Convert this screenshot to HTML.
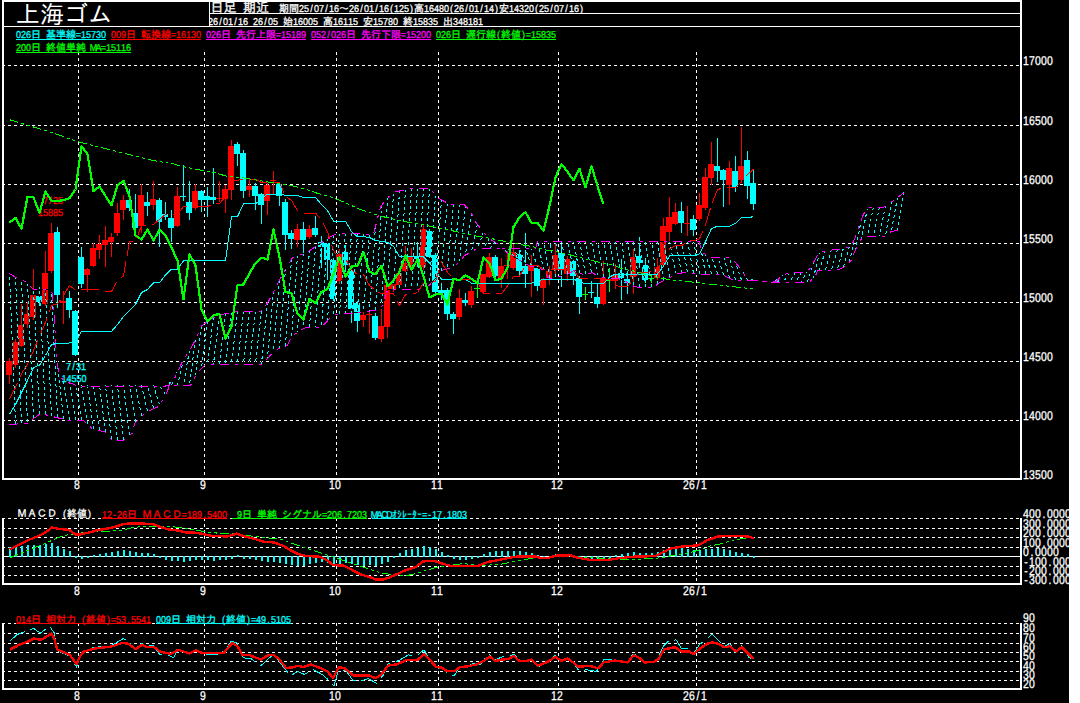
<!DOCTYPE html>
<html lang="ja"><head><meta charset="utf-8"><title>上海ゴム 日足 期近</title>
<style>html,body{margin:0;padding:0;background:#fff;overflow:hidden}svg{display:block;font-family:'Liberation Sans','IPAGothic',sans-serif}</style>
</head><body>
<svg width="1080" height="703" viewBox="0 0 1080 703" shape-rendering="crispEdges" text-rendering="geometricPrecision">
<rect x="0" y="0" width="1069" height="703" fill="#000"/>
<line x1="2" y1="65.5" x2="1020" y2="65.5" stroke="#fff" stroke-dasharray="3,3"/>
<line x1="2" y1="125.5" x2="1020" y2="125.5" stroke="#fff" stroke-dasharray="3,3"/>
<line x1="2" y1="184.5" x2="1020" y2="184.5" stroke="#fff" stroke-dasharray="3,3"/>
<line x1="2" y1="243.5" x2="1020" y2="243.5" stroke="#fff" stroke-dasharray="3,3"/>
<line x1="2" y1="302.5" x2="1020" y2="302.5" stroke="#fff" stroke-dasharray="3,3"/>
<line x1="2" y1="361.5" x2="1020" y2="361.5" stroke="#fff" stroke-dasharray="3,3"/>
<line x1="2" y1="420.5" x2="1020" y2="420.5" stroke="#fff" stroke-dasharray="3,3"/>
<line x1="78.5" y1="52" x2="78.5" y2="478" stroke="#fff" stroke-dasharray="3,3"/>
<line x1="204.5" y1="52" x2="204.5" y2="478" stroke="#fff" stroke-dasharray="3,3"/>
<line x1="336.5" y1="52" x2="336.5" y2="478" stroke="#fff" stroke-dasharray="3,3"/>
<line x1="438.5" y1="52" x2="438.5" y2="478" stroke="#fff" stroke-dasharray="3,3"/>
<line x1="558.5" y1="52" x2="558.5" y2="478" stroke="#fff" stroke-dasharray="3,3"/>
<line x1="696.5" y1="52" x2="696.5" y2="478" stroke="#fff" stroke-dasharray="3,3"/>
<line x1="2" y1="518.5" x2="1020" y2="518.5" stroke="#fff" stroke-dasharray="3,3"/>
<line x1="2" y1="528.5" x2="1020" y2="528.5" stroke="#fff" stroke-dasharray="3,3"/>
<line x1="2" y1="537.5" x2="1020" y2="537.5" stroke="#fff" stroke-dasharray="3,3"/>
<line x1="2" y1="547.5" x2="1020" y2="547.5" stroke="#fff" stroke-dasharray="3,3"/>
<line x1="2" y1="566.5" x2="1020" y2="566.5" stroke="#fff" stroke-dasharray="3,3"/>
<line x1="2" y1="575.5" x2="1020" y2="575.5" stroke="#fff" stroke-dasharray="3,3"/>
<line x1="78.5" y1="518" x2="78.5" y2="583" stroke="#fff" stroke-dasharray="3,3"/>
<line x1="204.5" y1="518" x2="204.5" y2="583" stroke="#fff" stroke-dasharray="3,3"/>
<line x1="336.5" y1="518" x2="336.5" y2="583" stroke="#fff" stroke-dasharray="3,3"/>
<line x1="438.5" y1="518" x2="438.5" y2="583" stroke="#fff" stroke-dasharray="3,3"/>
<line x1="558.5" y1="518" x2="558.5" y2="583" stroke="#fff" stroke-dasharray="3,3"/>
<line x1="696.5" y1="518" x2="696.5" y2="583" stroke="#fff" stroke-dasharray="3,3"/>
<line x1="2" y1="623.5" x2="1020" y2="623.5" stroke="#fff" stroke-dasharray="3,3"/>
<line x1="2" y1="633.5" x2="1020" y2="633.5" stroke="#fff" stroke-dasharray="3,3"/>
<line x1="2" y1="643.5" x2="1020" y2="643.5" stroke="#fff" stroke-dasharray="3,3"/>
<line x1="2" y1="652.5" x2="1020" y2="652.5" stroke="#fff" stroke-dasharray="3,3"/>
<line x1="2" y1="661.5" x2="1020" y2="661.5" stroke="#fff" stroke-dasharray="3,3"/>
<line x1="2" y1="671.5" x2="1020" y2="671.5" stroke="#fff" stroke-dasharray="3,3"/>
<line x1="2" y1="680.5" x2="1020" y2="680.5" stroke="#fff" stroke-dasharray="3,3"/>
<line x1="78.5" y1="623" x2="78.5" y2="688" stroke="#fff" stroke-dasharray="3,3"/>
<line x1="204.5" y1="623" x2="204.5" y2="688" stroke="#fff" stroke-dasharray="3,3"/>
<line x1="336.5" y1="623" x2="336.5" y2="688" stroke="#fff" stroke-dasharray="3,3"/>
<line x1="438.5" y1="623" x2="438.5" y2="688" stroke="#fff" stroke-dasharray="3,3"/>
<line x1="558.5" y1="623" x2="558.5" y2="688" stroke="#fff" stroke-dasharray="3,3"/>
<line x1="696.5" y1="623" x2="696.5" y2="688" stroke="#fff" stroke-dasharray="3,3"/>
<rect x="2" y="0" width="1020" height="2" fill="#fff"/>
<rect x="2" y="0" width="2" height="480" fill="#fff"/>
<rect x="1020" y="0" width="2" height="480" fill="#fff"/>
<rect x="2" y="478" width="1020" height="2" fill="#fff"/>
<rect x="209" y="13" width="811" height="1" fill="#fff"/>
<rect x="2" y="26" width="1018" height="1" fill="#fff"/>
<rect x="209" y="0" width="1" height="27" fill="#fff"/>
<rect x="2" y="518" width="2" height="67" fill="#fff"/>
<rect x="1020" y="518" width="2" height="67" fill="#fff"/>
<rect x="2" y="583" width="1020" height="2" fill="#fff"/>
<rect x="4" y="556" width="1016" height="1" fill="#fff"/>
<rect x="2" y="623" width="2" height="67" fill="#fff"/>
<rect x="1020" y="623" width="2" height="67" fill="#fff"/>
<rect x="2" y="688" width="1020" height="2" fill="#fff"/>
<g id="candles">
<rect x="9" y="358.3" width="1" height="25.6" fill="#f00"/>
<rect x="6" y="360.7" width="6" height="14.3" fill="#f00"/>
<rect x="15" y="339" width="1" height="28.5" fill="#f00"/>
<rect x="12" y="341.9" width="6" height="23.1" fill="#f00"/>
<rect x="21" y="303.5" width="1" height="43.5" fill="#f00"/>
<rect x="18" y="324.9" width="6" height="20.6" fill="#f00"/>
<rect x="27" y="302" width="1" height="26.4" fill="#f00"/>
<rect x="24" y="314.2" width="6" height="9.5" fill="#f00"/>
<rect x="33" y="269" width="1" height="51" fill="#f00"/>
<rect x="30" y="295" width="6" height="22" fill="#f00"/>
<rect x="39" y="286.8" width="1" height="19.2" fill="#0ff"/>
<rect x="36" y="295.7" width="6" height="6.3" fill="#0ff"/>
<rect x="45" y="251.2" width="1" height="54.8" fill="#f00"/>
<rect x="42" y="273.3" width="6" height="30.7" fill="#f00"/>
<rect x="51" y="222.8" width="1" height="49.7" fill="#f00"/>
<rect x="48" y="233" width="6" height="37.7" fill="#f00"/>
<rect x="57" y="227" width="1" height="80.8" fill="#0ff"/>
<rect x="54" y="232" width="6" height="62.5" fill="#0ff"/>
<rect x="63" y="291" width="1" height="33" fill="#f00"/>
<rect x="60" y="301" width="6" height="2" fill="#f00"/>
<rect x="69" y="291" width="1" height="27.4" fill="#0ff"/>
<rect x="66" y="297.8" width="6" height="12.1" fill="#0ff"/>
<rect x="75" y="310" width="1" height="46" fill="#0ff"/>
<rect x="72" y="311.3" width="6" height="43.8" fill="#0ff"/>
<rect x="81" y="247" width="1" height="40.5" fill="#0ff"/>
<rect x="78" y="256.9" width="6" height="26.7" fill="#0ff"/>
<rect x="87" y="268" width="1" height="24" fill="#f00"/>
<rect x="84" y="269" width="6" height="6" fill="#f00"/>
<rect x="93" y="243.3" width="1" height="23.4" fill="#f00"/>
<rect x="90" y="248" width="6" height="17.6" fill="#f00"/>
<rect x="99" y="235.4" width="1" height="23.6" fill="#f00"/>
<rect x="96" y="244" width="6" height="5.7" fill="#f00"/>
<rect x="105" y="226.2" width="1" height="40.5" fill="#f00"/>
<rect x="102" y="240" width="6" height="4.7" fill="#f00"/>
<rect x="111" y="233.3" width="1" height="23.5" fill="#f00"/>
<rect x="108" y="236.9" width="6" height="4.9" fill="#f00"/>
<rect x="117" y="203" width="1" height="32.7" fill="#f00"/>
<rect x="114" y="213.1" width="6" height="19.5" fill="#f00"/>
<rect x="123" y="195.3" width="1" height="24.5" fill="#f00"/>
<rect x="120" y="199.9" width="6" height="9.9" fill="#f00"/>
<rect x="129" y="189.2" width="1" height="21.8" fill="#0ff"/>
<rect x="126" y="199.9" width="6" height="7.8" fill="#0ff"/>
<rect x="135" y="194.2" width="1" height="34.8" fill="#0ff"/>
<rect x="132" y="212.7" width="6" height="15.3" fill="#0ff"/>
<rect x="141" y="183.8" width="1" height="49.5" fill="#f00"/>
<rect x="138" y="195.3" width="6" height="30.9" fill="#f00"/>
<rect x="147" y="192" width="1" height="23.5" fill="#0ff"/>
<rect x="144" y="202" width="6" height="3.8" fill="#0ff"/>
<rect x="153" y="181.1" width="1" height="28.7" fill="#f00"/>
<rect x="150" y="199.2" width="6" height="5.7" fill="#f00"/>
<rect x="159" y="198.4" width="1" height="48.4" fill="#0ff"/>
<rect x="156" y="199.9" width="6" height="22.2" fill="#0ff"/>
<rect x="165" y="201.8" width="1" height="18.1" fill="#0ff"/>
<rect x="162" y="214" width="6" height="3.2" fill="#0ff"/>
<rect x="171" y="210.4" width="1" height="31.4" fill="#0ff"/>
<rect x="168" y="218" width="6" height="10.2" fill="#0ff"/>
<rect x="177" y="187.3" width="1" height="39.2" fill="#f00"/>
<rect x="174" y="196.2" width="6" height="29.4" fill="#f00"/>
<rect x="183" y="164.9" width="1" height="35.8" fill="#0ff"/>
<rect x="180" y="195.9" width="6" height="1" fill="#0ff"/>
<rect x="189" y="181.2" width="1" height="38.4" fill="#0ff"/>
<rect x="186" y="201.8" width="6" height="10.7" fill="#0ff"/>
<rect x="195" y="184" width="1" height="26.4" fill="#f00"/>
<rect x="192" y="190.9" width="6" height="16.9" fill="#f00"/>
<rect x="201" y="189.7" width="1" height="22.1" fill="#0ff"/>
<rect x="198" y="190.5" width="6" height="9.9" fill="#0ff"/>
<rect x="207" y="186.9" width="1" height="30.1" fill="#0ff"/>
<rect x="204" y="196.4" width="6" height="4" fill="#0ff"/>
<rect x="213" y="168.1" width="1" height="35.9" fill="#0ff"/>
<rect x="210" y="196.9" width="6" height="2.8" fill="#0ff"/>
<rect x="219" y="181.2" width="1" height="20.6" fill="#f00"/>
<rect x="216" y="197.6" width="6" height="1.7" fill="#f00"/>
<rect x="225" y="184.8" width="1" height="27.7" fill="#f00"/>
<rect x="222" y="189" width="6" height="10" fill="#f00"/>
<rect x="231" y="140.2" width="1" height="59.5" fill="#f00"/>
<rect x="228" y="145.7" width="6" height="44" fill="#f00"/>
<rect x="237" y="142.1" width="1" height="23.5" fill="#0ff"/>
<rect x="234" y="143.8" width="6" height="9.7" fill="#0ff"/>
<rect x="243" y="150.2" width="1" height="48.1" fill="#0ff"/>
<rect x="240" y="152.8" width="6" height="38.1" fill="#0ff"/>
<rect x="249" y="179.8" width="1" height="16.8" fill="#f00"/>
<rect x="246" y="185.9" width="6" height="3.8" fill="#f00"/>
<rect x="255" y="182.9" width="1" height="26.8" fill="#0ff"/>
<rect x="252" y="186.2" width="6" height="9.3" fill="#0ff"/>
<rect x="261" y="192.8" width="1" height="31" fill="#0ff"/>
<rect x="258" y="193.9" width="6" height="10.8" fill="#0ff"/>
<rect x="267" y="182.8" width="1" height="32" fill="#f00"/>
<rect x="264" y="184.8" width="6" height="15.8" fill="#f00"/>
<rect x="273" y="171.1" width="1" height="23.8" fill="#f00"/>
<rect x="270" y="180.2" width="6" height="1.2" fill="#f00"/>
<rect x="279" y="182.8" width="1" height="22.8" fill="#0ff"/>
<rect x="276" y="183.5" width="6" height="12.5" fill="#0ff"/>
<rect x="285" y="199.2" width="1" height="50.5" fill="#0ff"/>
<rect x="282" y="202" width="6" height="33" fill="#0ff"/>
<rect x="291" y="229.7" width="1" height="19.2" fill="#0ff"/>
<rect x="288" y="233" width="6" height="6" fill="#0ff"/>
<rect x="297" y="224" width="1" height="22.8" fill="#f00"/>
<rect x="294" y="228.9" width="6" height="10.8" fill="#f00"/>
<rect x="303" y="221.9" width="1" height="32" fill="#0ff"/>
<rect x="300" y="229" width="6" height="11.1" fill="#0ff"/>
<rect x="309" y="224.8" width="1" height="14.2" fill="#f00"/>
<rect x="306" y="229.4" width="6" height="7.2" fill="#f00"/>
<rect x="315" y="215.9" width="1" height="20.6" fill="#0ff"/>
<rect x="312" y="227.6" width="6" height="7.8" fill="#0ff"/>
<rect x="321" y="235.7" width="1" height="32" fill="#0ff"/>
<rect x="318" y="241.8" width="6" height="5.2" fill="#0ff"/>
<rect x="327" y="241" width="1" height="38.8" fill="#0ff"/>
<rect x="324" y="242.8" width="6" height="17.3" fill="#0ff"/>
<rect x="333" y="258" width="1" height="43" fill="#0ff"/>
<rect x="330" y="259.9" width="6" height="38.9" fill="#0ff"/>
<rect x="339" y="249.2" width="1" height="34.8" fill="#f00"/>
<rect x="336" y="253.6" width="6" height="27.6" fill="#f00"/>
<rect x="345" y="244.9" width="1" height="27.1" fill="#0ff"/>
<rect x="342" y="252" width="6" height="13.2" fill="#0ff"/>
<rect x="351" y="268" width="1" height="54.5" fill="#0ff"/>
<rect x="348" y="270.5" width="6" height="38.2" fill="#0ff"/>
<rect x="357" y="301" width="1" height="31.2" fill="#0ff"/>
<rect x="354" y="302.6" width="6" height="18.1" fill="#0ff"/>
<rect x="363" y="310" width="1" height="16.8" fill="#f00"/>
<rect x="360" y="314.7" width="6" height="5" fill="#f00"/>
<rect x="369" y="311" width="1" height="22.9" fill="#f00"/>
<rect x="366" y="313.5" width="6" height="1.5" fill="#f00"/>
<rect x="375" y="312.6" width="1" height="27.3" fill="#0ff"/>
<rect x="372" y="315.7" width="6" height="22.4" fill="#0ff"/>
<rect x="381" y="309" width="1" height="32.7" fill="#f00"/>
<rect x="378" y="325.8" width="6" height="13.1" fill="#f00"/>
<rect x="387" y="283" width="1" height="55.2" fill="#f00"/>
<rect x="384" y="284.5" width="6" height="42.3" fill="#f00"/>
<rect x="393" y="278" width="1" height="14" fill="#f00"/>
<rect x="390" y="284" width="6" height="5" fill="#f00"/>
<rect x="399" y="270" width="1" height="16" fill="#f00"/>
<rect x="396" y="272.9" width="6" height="11.7" fill="#f00"/>
<rect x="405" y="246.3" width="1" height="25.7" fill="#f00"/>
<rect x="402" y="262.7" width="6" height="8" fill="#f00"/>
<rect x="411" y="248" width="1" height="20" fill="#f00"/>
<rect x="408" y="257.2" width="6" height="8.8" fill="#f00"/>
<rect x="417" y="242.3" width="1" height="24.7" fill="#0ff"/>
<rect x="414" y="256.5" width="6" height="2.4" fill="#0ff"/>
<rect x="423" y="223.5" width="1" height="46.1" fill="#f00"/>
<rect x="420" y="228.9" width="6" height="38.1" fill="#f00"/>
<rect x="429" y="229" width="1" height="29" fill="#0ff"/>
<rect x="426" y="231" width="6" height="25.7" fill="#0ff"/>
<rect x="435" y="253" width="1" height="41" fill="#0ff"/>
<rect x="432" y="255" width="6" height="36.7" fill="#0ff"/>
<rect x="441" y="283" width="1" height="17" fill="#0ff"/>
<rect x="438" y="290" width="6" height="2.5" fill="#0ff"/>
<rect x="447" y="288" width="1" height="32" fill="#0ff"/>
<rect x="444" y="290" width="6" height="23.5" fill="#0ff"/>
<rect x="453" y="312" width="1" height="21.6" fill="#0ff"/>
<rect x="450" y="314" width="6" height="5" fill="#0ff"/>
<rect x="459" y="289.3" width="1" height="30.7" fill="#f00"/>
<rect x="456" y="298.2" width="6" height="18.5" fill="#f00"/>
<rect x="465" y="292.5" width="1" height="13.5" fill="#0ff"/>
<rect x="462" y="300" width="6" height="2.8" fill="#0ff"/>
<rect x="471" y="286" width="1" height="21.5" fill="#f00"/>
<rect x="468" y="291.3" width="6" height="13.3" fill="#f00"/>
<rect x="477" y="282.6" width="1" height="14.9" fill="#0f0"/>
<rect x="474" y="288.3" width="6" height="1" fill="#0f0"/>
<rect x="483" y="273.8" width="1" height="19.2" fill="#f00"/>
<rect x="480" y="273.8" width="6" height="18" fill="#f00"/>
<rect x="489" y="253" width="1" height="25" fill="#f00"/>
<rect x="486" y="256.7" width="6" height="20.2" fill="#f00"/>
<rect x="495" y="254.9" width="1" height="24.1" fill="#0ff"/>
<rect x="492" y="257" width="6" height="19.3" fill="#0ff"/>
<rect x="501" y="257.7" width="1" height="30.6" fill="#f00"/>
<rect x="498" y="266.1" width="6" height="11.5" fill="#f00"/>
<rect x="507" y="250.6" width="1" height="28.4" fill="#f00"/>
<rect x="504" y="265.2" width="6" height="1" fill="#f00"/>
<rect x="513" y="243.5" width="1" height="26.3" fill="#f00"/>
<rect x="510" y="251.6" width="6" height="16.1" fill="#f00"/>
<rect x="519" y="250" width="1" height="25" fill="#0ff"/>
<rect x="516" y="254.1" width="6" height="17.1" fill="#0ff"/>
<rect x="525" y="233.1" width="1" height="54.5" fill="#0ff"/>
<rect x="522" y="266.2" width="6" height="7.6" fill="#0ff"/>
<rect x="531" y="254.9" width="1" height="41.9" fill="#f00"/>
<rect x="528" y="265.2" width="6" height="5.3" fill="#f00"/>
<rect x="537" y="267" width="1" height="23.7" fill="#0ff"/>
<rect x="534" y="268.4" width="6" height="17.3" fill="#0ff"/>
<rect x="543" y="278" width="1" height="26.6" fill="#f00"/>
<rect x="540" y="279.7" width="6" height="8.3" fill="#f00"/>
<rect x="549" y="265.5" width="1" height="19.2" fill="#f00"/>
<rect x="546" y="271.2" width="6" height="6.4" fill="#f00"/>
<rect x="555" y="242.8" width="1" height="32.7" fill="#f00"/>
<rect x="552" y="255" width="6" height="14.8" fill="#f00"/>
<rect x="561" y="243.5" width="1" height="43.4" fill="#0ff"/>
<rect x="558" y="253.4" width="6" height="16.1" fill="#0ff"/>
<rect x="567" y="255.6" width="1" height="24.9" fill="#f00"/>
<rect x="564" y="259.1" width="6" height="14.9" fill="#f00"/>
<rect x="573" y="260" width="1" height="25.4" fill="#0ff"/>
<rect x="570" y="261.3" width="6" height="14.2" fill="#0ff"/>
<rect x="579" y="276" width="1" height="37.9" fill="#0ff"/>
<rect x="576" y="277.6" width="6" height="19.2" fill="#0ff"/>
<rect x="585" y="286.9" width="1" height="12.8" fill="#0f0"/>
<rect x="582" y="294" width="6" height="1" fill="#0f0"/>
<rect x="591" y="281.2" width="1" height="16.3" fill="#0ff"/>
<rect x="588" y="292.3" width="6" height="1" fill="#0ff"/>
<rect x="597" y="283.3" width="1" height="24.2" fill="#0ff"/>
<rect x="594" y="297.2" width="6" height="6.7" fill="#0ff"/>
<rect x="603" y="261.3" width="1" height="43.7" fill="#f00"/>
<rect x="600" y="278.3" width="6" height="25.6" fill="#f00"/>
<rect x="609" y="267.6" width="1" height="24.4" fill="#0f0"/>
<rect x="606" y="279.7" width="6" height="1" fill="#0f0"/>
<rect x="615" y="264" width="1" height="24.6" fill="#f00"/>
<rect x="612" y="274.8" width="6" height="6.2" fill="#f00"/>
<rect x="621" y="259" width="1" height="41" fill="#0ff"/>
<rect x="618" y="272.6" width="6" height="5.7" fill="#0ff"/>
<rect x="627" y="271" width="1" height="23" fill="#0ff"/>
<rect x="624" y="279" width="6" height="3.6" fill="#0ff"/>
<rect x="633" y="249" width="1" height="45" fill="#f00"/>
<rect x="630" y="257" width="6" height="20" fill="#f00"/>
<rect x="639" y="237" width="1" height="31" fill="#0ff"/>
<rect x="636" y="256.2" width="6" height="6.5" fill="#0ff"/>
<rect x="645" y="258.4" width="1" height="25.6" fill="#0ff"/>
<rect x="642" y="264.8" width="6" height="14.9" fill="#0ff"/>
<rect x="651" y="274.7" width="1" height="9.3" fill="#0f0"/>
<rect x="648" y="278.3" width="6" height="1" fill="#0f0"/>
<rect x="657" y="258.4" width="1" height="21.6" fill="#f00"/>
<rect x="654" y="266.9" width="6" height="11.4" fill="#f00"/>
<rect x="663" y="217.6" width="1" height="48.4" fill="#f00"/>
<rect x="660" y="226.4" width="6" height="38.4" fill="#f00"/>
<rect x="669" y="196.8" width="1" height="43.8" fill="#f00"/>
<rect x="666" y="216.8" width="6" height="15.2" fill="#f00"/>
<rect x="675" y="203.2" width="1" height="21.8" fill="#f00"/>
<rect x="672" y="211.7" width="6" height="11.8" fill="#f00"/>
<rect x="681" y="201.8" width="1" height="31" fill="#0ff"/>
<rect x="678" y="211" width="6" height="11.5" fill="#0ff"/>
<rect x="687" y="206" width="1" height="30.3" fill="#f00"/>
<rect x="684" y="222.5" width="6" height="1.5" fill="#f00"/>
<rect x="693" y="215.3" width="1" height="20.3" fill="#0ff"/>
<rect x="690" y="218.9" width="6" height="11.5" fill="#0ff"/>
<rect x="699" y="192.5" width="1" height="28.5" fill="#f00"/>
<rect x="696" y="205.4" width="6" height="13.8" fill="#f00"/>
<rect x="705" y="168.4" width="1" height="41.2" fill="#f00"/>
<rect x="702" y="176.9" width="6" height="30.6" fill="#f00"/>
<rect x="711" y="142" width="1" height="42.7" fill="#f00"/>
<rect x="708" y="163.6" width="6" height="14.7" fill="#f00"/>
<rect x="717" y="137.8" width="1" height="44.1" fill="#0ff"/>
<rect x="714" y="165.8" width="6" height="5.5" fill="#0ff"/>
<rect x="723" y="168.5" width="1" height="38.3" fill="#0ff"/>
<rect x="720" y="169.8" width="6" height="10" fill="#0ff"/>
<rect x="729" y="161.3" width="1" height="43.3" fill="#f00"/>
<rect x="726" y="168.4" width="6" height="16.3" fill="#f00"/>
<rect x="735" y="156.3" width="1" height="35.5" fill="#0ff"/>
<rect x="732" y="170.9" width="6" height="16" fill="#0ff"/>
<rect x="741" y="127.1" width="1" height="56.2" fill="#f00"/>
<rect x="738" y="165.6" width="6" height="14.1" fill="#f00"/>
<rect x="747" y="151" width="1" height="47.9" fill="#0ff"/>
<rect x="744" y="160.1" width="6" height="25.4" fill="#0ff"/>
<rect x="753" y="169.8" width="1" height="40.5" fill="#0ff"/>
<rect x="750" y="182.9" width="6" height="20.7" fill="#0ff"/>
</g>
<g id="cloud">
<line x1="15.5" y1="423.6" x2="9.5" y2="273" stroke="#000"/>
<line x1="15.5" y1="423.6" x2="9.5" y2="273" stroke="#0ff" stroke-dasharray="3,3"/>
<line x1="21.5" y1="423.2" x2="15.5" y2="276.8" stroke="#000"/>
<line x1="21.5" y1="423.2" x2="15.5" y2="276.8" stroke="#0ff" stroke-dasharray="3,3"/>
<line x1="27.5" y1="422.5" x2="21.5" y2="279.5" stroke="#000"/>
<line x1="27.5" y1="422.5" x2="21.5" y2="279.5" stroke="#0ff" stroke-dasharray="3,3"/>
<line x1="33.5" y1="418.1" x2="27.5" y2="283" stroke="#000"/>
<line x1="33.5" y1="418.1" x2="27.5" y2="283" stroke="#0ff" stroke-dasharray="3,3"/>
<line x1="39.5" y1="413.7" x2="33.5" y2="289" stroke="#000"/>
<line x1="39.5" y1="413.7" x2="33.5" y2="289" stroke="#0ff" stroke-dasharray="3,3"/>
<line x1="45.5" y1="414.2" x2="39.5" y2="289" stroke="#000"/>
<line x1="45.5" y1="414.2" x2="39.5" y2="289" stroke="#0ff" stroke-dasharray="3,3"/>
<line x1="51.5" y1="415.8" x2="45.5" y2="289" stroke="#000"/>
<line x1="51.5" y1="415.8" x2="45.5" y2="289" stroke="#0ff" stroke-dasharray="3,3"/>
<line x1="57.5" y1="417.2" x2="51.5" y2="292" stroke="#000"/>
<line x1="57.5" y1="417.2" x2="51.5" y2="292" stroke="#0ff" stroke-dasharray="3,3"/>
<line x1="63.5" y1="418.6" x2="57.5" y2="364" stroke="#000"/>
<line x1="63.5" y1="418.6" x2="57.5" y2="364" stroke="#0ff" stroke-dasharray="3,3"/>
<line x1="69.5" y1="419.8" x2="63.5" y2="381" stroke="#000"/>
<line x1="69.5" y1="419.8" x2="63.5" y2="381" stroke="#0ff" stroke-dasharray="3,3"/>
<line x1="75.5" y1="420" x2="69.5" y2="382.5" stroke="#000"/>
<line x1="75.5" y1="420" x2="69.5" y2="382.5" stroke="#0ff" stroke-dasharray="3,3"/>
<line x1="81.5" y1="420" x2="75.5" y2="384.7" stroke="#000"/>
<line x1="81.5" y1="420" x2="75.5" y2="384.7" stroke="#0ff" stroke-dasharray="3,3"/>
<line x1="87.5" y1="423.8" x2="81.5" y2="385.5" stroke="#000"/>
<line x1="87.5" y1="423.8" x2="81.5" y2="385.5" stroke="#0ff" stroke-dasharray="3,3"/>
<line x1="93.5" y1="429.5" x2="87.5" y2="385.5" stroke="#000"/>
<line x1="93.5" y1="429.5" x2="87.5" y2="385.5" stroke="#0ff" stroke-dasharray="3,3"/>
<line x1="99.5" y1="430.3" x2="93.5" y2="385.5" stroke="#000"/>
<line x1="99.5" y1="430.3" x2="93.5" y2="385.5" stroke="#0ff" stroke-dasharray="3,3"/>
<line x1="105.5" y1="432.2" x2="99.5" y2="385.5" stroke="#000"/>
<line x1="105.5" y1="432.2" x2="99.5" y2="385.5" stroke="#0ff" stroke-dasharray="3,3"/>
<line x1="111.5" y1="439.2" x2="105.5" y2="385.5" stroke="#000"/>
<line x1="111.5" y1="439.2" x2="105.5" y2="385.5" stroke="#0ff" stroke-dasharray="3,3"/>
<line x1="117.5" y1="440.5" x2="111.5" y2="385.5" stroke="#000"/>
<line x1="117.5" y1="440.5" x2="111.5" y2="385.5" stroke="#0ff" stroke-dasharray="3,3"/>
<line x1="123.5" y1="439.7" x2="117.5" y2="385.5" stroke="#000"/>
<line x1="123.5" y1="439.7" x2="117.5" y2="385.5" stroke="#0ff" stroke-dasharray="3,3"/>
<line x1="129.5" y1="434.9" x2="123.5" y2="385.5" stroke="#000"/>
<line x1="129.5" y1="434.9" x2="123.5" y2="385.5" stroke="#0ff" stroke-dasharray="3,3"/>
<line x1="135.5" y1="421.8" x2="129.5" y2="385.5" stroke="#000"/>
<line x1="135.5" y1="421.8" x2="129.5" y2="385.5" stroke="#0ff" stroke-dasharray="3,3"/>
<line x1="141.5" y1="415.9" x2="135.5" y2="385.5" stroke="#000"/>
<line x1="141.5" y1="415.9" x2="135.5" y2="385.5" stroke="#0ff" stroke-dasharray="3,3"/>
<line x1="147.5" y1="411.1" x2="141.5" y2="385.5" stroke="#000"/>
<line x1="147.5" y1="411.1" x2="141.5" y2="385.5" stroke="#0ff" stroke-dasharray="3,3"/>
<line x1="153.5" y1="408.3" x2="147.5" y2="385.5" stroke="#000"/>
<line x1="153.5" y1="408.3" x2="147.5" y2="385.5" stroke="#0ff" stroke-dasharray="3,3"/>
<line x1="159.5" y1="404.9" x2="153.5" y2="385.5" stroke="#000"/>
<line x1="159.5" y1="404.9" x2="153.5" y2="385.5" stroke="#0ff" stroke-dasharray="3,3"/>
<line x1="165.5" y1="394.5" x2="159.5" y2="385.5" stroke="#000"/>
<line x1="165.5" y1="394.5" x2="159.5" y2="385.5" stroke="#0ff" stroke-dasharray="3,3"/>
<line x1="171.5" y1="381.8" x2="165.5" y2="385.5" stroke="#000"/>
<line x1="171.5" y1="381.8" x2="165.5" y2="385.5" stroke="#0ff" stroke-dasharray="3,3"/>
<line x1="177.5" y1="371.5" x2="171.5" y2="385" stroke="#000"/>
<line x1="177.5" y1="371.5" x2="171.5" y2="385" stroke="#0ff" stroke-dasharray="3,3"/>
<line x1="183.5" y1="359.5" x2="177.5" y2="385" stroke="#000"/>
<line x1="183.5" y1="359.5" x2="177.5" y2="385" stroke="#0ff" stroke-dasharray="3,3"/>
<line x1="189.5" y1="349.8" x2="183.5" y2="385" stroke="#000"/>
<line x1="189.5" y1="349.8" x2="183.5" y2="385" stroke="#0ff" stroke-dasharray="3,3"/>
<line x1="195.5" y1="338.8" x2="189.5" y2="385" stroke="#000"/>
<line x1="195.5" y1="338.8" x2="189.5" y2="385" stroke="#0ff" stroke-dasharray="3,3"/>
<line x1="201.5" y1="325.7" x2="195.5" y2="375.7" stroke="#000"/>
<line x1="201.5" y1="325.7" x2="195.5" y2="375.7" stroke="#0ff" stroke-dasharray="3,3"/>
<line x1="207.5" y1="321.2" x2="201.5" y2="368.1" stroke="#000"/>
<line x1="207.5" y1="321.2" x2="201.5" y2="368.1" stroke="#0ff" stroke-dasharray="3,3"/>
<line x1="213.5" y1="317.4" x2="207.5" y2="363.7" stroke="#000"/>
<line x1="213.5" y1="317.4" x2="207.5" y2="363.7" stroke="#0ff" stroke-dasharray="3,3"/>
<line x1="219.5" y1="314.9" x2="213.5" y2="363.7" stroke="#000"/>
<line x1="219.5" y1="314.9" x2="213.5" y2="363.7" stroke="#0ff" stroke-dasharray="3,3"/>
<line x1="225.5" y1="313.2" x2="219.5" y2="363.7" stroke="#000"/>
<line x1="225.5" y1="313.2" x2="219.5" y2="363.7" stroke="#0ff" stroke-dasharray="3,3"/>
<line x1="231.5" y1="311.9" x2="225.5" y2="363.7" stroke="#000"/>
<line x1="231.5" y1="311.9" x2="225.5" y2="363.7" stroke="#0ff" stroke-dasharray="3,3"/>
<line x1="237.5" y1="311" x2="231.5" y2="363.7" stroke="#000"/>
<line x1="237.5" y1="311" x2="231.5" y2="363.7" stroke="#0ff" stroke-dasharray="3,3"/>
<line x1="243.5" y1="310.9" x2="237.5" y2="363.7" stroke="#000"/>
<line x1="243.5" y1="310.9" x2="237.5" y2="363.7" stroke="#0ff" stroke-dasharray="3,3"/>
<line x1="249.5" y1="310.7" x2="243.5" y2="363.7" stroke="#000"/>
<line x1="249.5" y1="310.7" x2="243.5" y2="363.7" stroke="#0ff" stroke-dasharray="3,3"/>
<line x1="255.5" y1="310.6" x2="249.5" y2="363.7" stroke="#000"/>
<line x1="255.5" y1="310.6" x2="249.5" y2="363.7" stroke="#0ff" stroke-dasharray="3,3"/>
<line x1="261.5" y1="310.5" x2="255.5" y2="363.7" stroke="#000"/>
<line x1="261.5" y1="310.5" x2="255.5" y2="363.7" stroke="#0ff" stroke-dasharray="3,3"/>
<line x1="267.5" y1="302.4" x2="261.5" y2="363.7" stroke="#000"/>
<line x1="267.5" y1="302.4" x2="261.5" y2="363.7" stroke="#0ff" stroke-dasharray="3,3"/>
<line x1="273.5" y1="291.3" x2="267.5" y2="358.1" stroke="#000"/>
<line x1="273.5" y1="291.3" x2="267.5" y2="358.1" stroke="#0ff" stroke-dasharray="3,3"/>
<line x1="279.5" y1="279.8" x2="273.5" y2="352.1" stroke="#000"/>
<line x1="279.5" y1="279.8" x2="273.5" y2="352.1" stroke="#0ff" stroke-dasharray="3,3"/>
<line x1="285.5" y1="268.4" x2="279.5" y2="347.7" stroke="#000"/>
<line x1="285.5" y1="268.4" x2="279.5" y2="347.7" stroke="#0ff" stroke-dasharray="3,3"/>
<line x1="291.5" y1="258.9" x2="285.5" y2="345.6" stroke="#000"/>
<line x1="291.5" y1="258.9" x2="285.5" y2="345.6" stroke="#0ff" stroke-dasharray="3,3"/>
<line x1="297.5" y1="255.4" x2="291.5" y2="336.9" stroke="#000"/>
<line x1="297.5" y1="255.4" x2="291.5" y2="336.9" stroke="#0ff" stroke-dasharray="3,3"/>
<line x1="303.5" y1="253.5" x2="297.5" y2="331.9" stroke="#000"/>
<line x1="303.5" y1="253.5" x2="297.5" y2="331.9" stroke="#0ff" stroke-dasharray="3,3"/>
<line x1="309.5" y1="250.1" x2="303.5" y2="328.2" stroke="#000"/>
<line x1="309.5" y1="250.1" x2="303.5" y2="328.2" stroke="#0ff" stroke-dasharray="3,3"/>
<line x1="315.5" y1="246.1" x2="309.5" y2="327" stroke="#000"/>
<line x1="315.5" y1="246.1" x2="309.5" y2="327" stroke="#0ff" stroke-dasharray="3,3"/>
<line x1="321.5" y1="242.1" x2="315.5" y2="327" stroke="#000"/>
<line x1="321.5" y1="242.1" x2="315.5" y2="327" stroke="#0ff" stroke-dasharray="3,3"/>
<line x1="327.5" y1="238.2" x2="321.5" y2="326.7" stroke="#000"/>
<line x1="327.5" y1="238.2" x2="321.5" y2="326.7" stroke="#0ff" stroke-dasharray="3,3"/>
<line x1="333.5" y1="234.6" x2="327.5" y2="320.3" stroke="#000"/>
<line x1="333.5" y1="234.6" x2="327.5" y2="320.3" stroke="#0ff" stroke-dasharray="3,3"/>
<line x1="339.5" y1="232.8" x2="333.5" y2="314.8" stroke="#000"/>
<line x1="339.5" y1="232.8" x2="333.5" y2="314.8" stroke="#0ff" stroke-dasharray="3,3"/>
<line x1="345.5" y1="232.8" x2="339.5" y2="313.9" stroke="#000"/>
<line x1="345.5" y1="232.8" x2="339.5" y2="313.9" stroke="#0ff" stroke-dasharray="3,3"/>
<line x1="351.5" y1="232.9" x2="345.5" y2="313.4" stroke="#000"/>
<line x1="351.5" y1="232.9" x2="345.5" y2="313.4" stroke="#0ff" stroke-dasharray="3,3"/>
<line x1="357.5" y1="233.2" x2="351.5" y2="312.9" stroke="#000"/>
<line x1="357.5" y1="233.2" x2="351.5" y2="312.9" stroke="#0ff" stroke-dasharray="3,3"/>
<line x1="363.5" y1="233.5" x2="357.5" y2="312.1" stroke="#000"/>
<line x1="363.5" y1="233.5" x2="357.5" y2="312.1" stroke="#0ff" stroke-dasharray="3,3"/>
<line x1="369.5" y1="233.8" x2="363.5" y2="311.4" stroke="#000"/>
<line x1="369.5" y1="233.8" x2="363.5" y2="311.4" stroke="#0ff" stroke-dasharray="3,3"/>
<line x1="375.5" y1="225.8" x2="369.5" y2="310.6" stroke="#000"/>
<line x1="375.5" y1="225.8" x2="369.5" y2="310.6" stroke="#0ff" stroke-dasharray="3,3"/>
<line x1="381.5" y1="205.2" x2="375.5" y2="309.8" stroke="#000"/>
<line x1="381.5" y1="205.2" x2="375.5" y2="309.8" stroke="#0ff" stroke-dasharray="3,3"/>
<line x1="387.5" y1="197.3" x2="381.5" y2="305.9" stroke="#000"/>
<line x1="387.5" y1="197.3" x2="381.5" y2="305.9" stroke="#0ff" stroke-dasharray="3,3"/>
<line x1="393.5" y1="193" x2="387.5" y2="289.5" stroke="#000"/>
<line x1="393.5" y1="193" x2="387.5" y2="289.5" stroke="#0ff" stroke-dasharray="3,3"/>
<line x1="399.5" y1="190.5" x2="393.5" y2="289.4" stroke="#000"/>
<line x1="399.5" y1="190.5" x2="393.5" y2="289.4" stroke="#0ff" stroke-dasharray="3,3"/>
<line x1="405.5" y1="189.2" x2="399.5" y2="289.3" stroke="#000"/>
<line x1="405.5" y1="189.2" x2="399.5" y2="289.3" stroke="#0ff" stroke-dasharray="3,3"/>
<line x1="411.5" y1="187.9" x2="405.5" y2="289.3" stroke="#000"/>
<line x1="411.5" y1="187.9" x2="405.5" y2="289.3" stroke="#0ff" stroke-dasharray="3,3"/>
<line x1="417.5" y1="187.6" x2="411.5" y2="289.2" stroke="#000"/>
<line x1="417.5" y1="187.6" x2="411.5" y2="289.2" stroke="#0ff" stroke-dasharray="3,3"/>
<line x1="423.5" y1="187.6" x2="417.5" y2="289.1" stroke="#000"/>
<line x1="423.5" y1="187.6" x2="417.5" y2="289.1" stroke="#0ff" stroke-dasharray="3,3"/>
<line x1="429.5" y1="187.6" x2="423.5" y2="289" stroke="#000"/>
<line x1="429.5" y1="187.6" x2="423.5" y2="289" stroke="#0ff" stroke-dasharray="3,3"/>
<line x1="435.5" y1="194.7" x2="429.5" y2="284.4" stroke="#000"/>
<line x1="435.5" y1="194.7" x2="429.5" y2="284.4" stroke="#0ff" stroke-dasharray="3,3"/>
<line x1="441.5" y1="199.4" x2="435.5" y2="277.8" stroke="#000"/>
<line x1="441.5" y1="199.4" x2="435.5" y2="277.8" stroke="#0ff" stroke-dasharray="3,3"/>
<line x1="447.5" y1="202.6" x2="441.5" y2="271.2" stroke="#000"/>
<line x1="447.5" y1="202.6" x2="441.5" y2="271.2" stroke="#0ff" stroke-dasharray="3,3"/>
<line x1="453.5" y1="204" x2="447.5" y2="268.4" stroke="#000"/>
<line x1="453.5" y1="204" x2="447.5" y2="268.4" stroke="#0ff" stroke-dasharray="3,3"/>
<line x1="459.5" y1="204" x2="453.5" y2="265.9" stroke="#000"/>
<line x1="459.5" y1="204" x2="453.5" y2="265.9" stroke="#0ff" stroke-dasharray="3,3"/>
<line x1="465.5" y1="205.3" x2="459.5" y2="261.6" stroke="#000"/>
<line x1="465.5" y1="205.3" x2="459.5" y2="261.6" stroke="#0ff" stroke-dasharray="3,3"/>
<line x1="471.5" y1="213.1" x2="465.5" y2="254.6" stroke="#000"/>
<line x1="471.5" y1="213.1" x2="465.5" y2="254.6" stroke="#0ff" stroke-dasharray="3,3"/>
<line x1="477.5" y1="224" x2="471.5" y2="251.2" stroke="#000"/>
<line x1="477.5" y1="224" x2="471.5" y2="251.2" stroke="#0ff" stroke-dasharray="3,3"/>
<line x1="483.5" y1="232" x2="477.5" y2="248.4" stroke="#000"/>
<line x1="483.5" y1="232" x2="477.5" y2="248.4" stroke="#0ff" stroke-dasharray="3,3"/>
<line x1="489.5" y1="238" x2="483.5" y2="248.4" stroke="#000"/>
<line x1="489.5" y1="238" x2="483.5" y2="248.4" stroke="#0ff" stroke-dasharray="3,3"/>
<line x1="495.5" y1="242" x2="489.5" y2="248.4" stroke="#000"/>
<line x1="495.5" y1="242" x2="489.5" y2="248.4" stroke="#0ff" stroke-dasharray="3,3"/>
<line x1="507.5" y1="252.4" x2="501.5" y2="248.4" stroke="#000"/>
<line x1="507.5" y1="252.4" x2="501.5" y2="248.4" stroke="#0ff" stroke-dasharray="3,3"/>
<line x1="513.5" y1="256" x2="507.5" y2="248.4" stroke="#000"/>
<line x1="513.5" y1="256" x2="507.5" y2="248.4" stroke="#0ff" stroke-dasharray="3,3"/>
<line x1="519.5" y1="259.6" x2="513.5" y2="248.4" stroke="#000"/>
<line x1="519.5" y1="259.6" x2="513.5" y2="248.4" stroke="#0ff" stroke-dasharray="3,3"/>
<line x1="525.5" y1="263.3" x2="519.5" y2="248.4" stroke="#000"/>
<line x1="525.5" y1="263.3" x2="519.5" y2="248.4" stroke="#0ff" stroke-dasharray="3,3"/>
<line x1="531.5" y1="265.9" x2="525.5" y2="248.4" stroke="#000"/>
<line x1="531.5" y1="265.9" x2="525.5" y2="248.4" stroke="#0ff" stroke-dasharray="3,3"/>
<line x1="537.5" y1="267.5" x2="531.5" y2="248.4" stroke="#000"/>
<line x1="537.5" y1="267.5" x2="531.5" y2="248.4" stroke="#0ff" stroke-dasharray="3,3"/>
<line x1="543.5" y1="269.5" x2="537.5" y2="240.6" stroke="#000"/>
<line x1="543.5" y1="269.5" x2="537.5" y2="240.6" stroke="#0ff" stroke-dasharray="3,3"/>
<line x1="549.5" y1="277.6" x2="543.5" y2="240.6" stroke="#000"/>
<line x1="549.5" y1="277.6" x2="543.5" y2="240.6" stroke="#0ff" stroke-dasharray="3,3"/>
<line x1="555.5" y1="277.1" x2="549.5" y2="240.6" stroke="#000"/>
<line x1="555.5" y1="277.1" x2="549.5" y2="240.6" stroke="#0ff" stroke-dasharray="3,3"/>
<line x1="561.5" y1="275.4" x2="555.5" y2="240.6" stroke="#000"/>
<line x1="561.5" y1="275.4" x2="555.5" y2="240.6" stroke="#0ff" stroke-dasharray="3,3"/>
<line x1="567.5" y1="273.6" x2="561.5" y2="240.6" stroke="#000"/>
<line x1="567.5" y1="273.6" x2="561.5" y2="240.6" stroke="#0ff" stroke-dasharray="3,3"/>
<line x1="573.5" y1="270.4" x2="567.5" y2="240.6" stroke="#000"/>
<line x1="573.5" y1="270.4" x2="567.5" y2="240.6" stroke="#0ff" stroke-dasharray="3,3"/>
<line x1="579.5" y1="272.9" x2="573.5" y2="240.6" stroke="#000"/>
<line x1="579.5" y1="272.9" x2="573.5" y2="240.6" stroke="#0ff" stroke-dasharray="3,3"/>
<line x1="585.5" y1="274" x2="579.5" y2="240.6" stroke="#000"/>
<line x1="585.5" y1="274" x2="579.5" y2="240.6" stroke="#0ff" stroke-dasharray="3,3"/>
<line x1="591.5" y1="272.2" x2="585.5" y2="240.6" stroke="#000"/>
<line x1="591.5" y1="272.2" x2="585.5" y2="240.6" stroke="#0ff" stroke-dasharray="3,3"/>
<line x1="597.5" y1="275.4" x2="591.5" y2="240.6" stroke="#000"/>
<line x1="597.5" y1="275.4" x2="591.5" y2="240.6" stroke="#0ff" stroke-dasharray="3,3"/>
<line x1="603.5" y1="277.4" x2="597.5" y2="240.6" stroke="#000"/>
<line x1="603.5" y1="277.4" x2="597.5" y2="240.6" stroke="#0ff" stroke-dasharray="3,3"/>
<line x1="609.5" y1="277.8" x2="603.5" y2="240.6" stroke="#000"/>
<line x1="609.5" y1="277.8" x2="603.5" y2="240.6" stroke="#0ff" stroke-dasharray="3,3"/>
<line x1="615.5" y1="278.1" x2="609.5" y2="240.6" stroke="#000"/>
<line x1="615.5" y1="278.1" x2="609.5" y2="240.6" stroke="#0ff" stroke-dasharray="3,3"/>
<line x1="621.5" y1="279.3" x2="615.5" y2="240.6" stroke="#000"/>
<line x1="621.5" y1="279.3" x2="615.5" y2="240.6" stroke="#0ff" stroke-dasharray="3,3"/>
<line x1="627.5" y1="282.1" x2="621.5" y2="240.6" stroke="#000"/>
<line x1="627.5" y1="282.1" x2="621.5" y2="240.6" stroke="#0ff" stroke-dasharray="3,3"/>
<line x1="633.5" y1="285.4" x2="627.5" y2="240.6" stroke="#000"/>
<line x1="633.5" y1="285.4" x2="627.5" y2="240.6" stroke="#0ff" stroke-dasharray="3,3"/>
<line x1="639.5" y1="287.1" x2="633.5" y2="240.6" stroke="#000"/>
<line x1="639.5" y1="287.1" x2="633.5" y2="240.6" stroke="#0ff" stroke-dasharray="3,3"/>
<line x1="645.5" y1="287.3" x2="639.5" y2="240.6" stroke="#000"/>
<line x1="645.5" y1="287.3" x2="639.5" y2="240.6" stroke="#0ff" stroke-dasharray="3,3"/>
<line x1="651.5" y1="286.9" x2="645.5" y2="240.6" stroke="#000"/>
<line x1="651.5" y1="286.9" x2="645.5" y2="240.6" stroke="#0ff" stroke-dasharray="3,3"/>
<line x1="657.5" y1="283.7" x2="651.5" y2="240.6" stroke="#000"/>
<line x1="657.5" y1="283.7" x2="651.5" y2="240.6" stroke="#0ff" stroke-dasharray="3,3"/>
<line x1="663.5" y1="280.2" x2="657.5" y2="240.6" stroke="#000"/>
<line x1="663.5" y1="280.2" x2="657.5" y2="240.6" stroke="#0ff" stroke-dasharray="3,3"/>
<line x1="669.5" y1="277.2" x2="663.5" y2="240.6" stroke="#000"/>
<line x1="669.5" y1="277.2" x2="663.5" y2="240.6" stroke="#0ff" stroke-dasharray="3,3"/>
<line x1="675.5" y1="273.6" x2="669.5" y2="240.6" stroke="#000"/>
<line x1="675.5" y1="273.6" x2="669.5" y2="240.6" stroke="#0ff" stroke-dasharray="3,3"/>
<line x1="681.5" y1="272.5" x2="675.5" y2="240.6" stroke="#000"/>
<line x1="681.5" y1="272.5" x2="675.5" y2="240.6" stroke="#0ff" stroke-dasharray="3,3"/>
<line x1="687.5" y1="272.2" x2="681.5" y2="240.6" stroke="#000"/>
<line x1="687.5" y1="272.2" x2="681.5" y2="240.6" stroke="#0ff" stroke-dasharray="3,3"/>
<line x1="693.5" y1="273.2" x2="687.5" y2="240.6" stroke="#000"/>
<line x1="693.5" y1="273.2" x2="687.5" y2="240.6" stroke="#0ff" stroke-dasharray="3,3"/>
<line x1="699.5" y1="274" x2="693.5" y2="240.6" stroke="#000"/>
<line x1="699.5" y1="274" x2="693.5" y2="240.6" stroke="#0ff" stroke-dasharray="3,3"/>
<line x1="705.5" y1="273.8" x2="699.5" y2="240.6" stroke="#000"/>
<line x1="705.5" y1="273.8" x2="699.5" y2="240.6" stroke="#0ff" stroke-dasharray="3,3"/>
<line x1="711.5" y1="273.7" x2="705.5" y2="254" stroke="#000"/>
<line x1="711.5" y1="273.7" x2="705.5" y2="254" stroke="#0ff" stroke-dasharray="3,3"/>
<line x1="717.5" y1="273.6" x2="711.5" y2="256.6" stroke="#000"/>
<line x1="717.5" y1="273.6" x2="711.5" y2="256.6" stroke="#0ff" stroke-dasharray="3,3"/>
<line x1="723.5" y1="274.7" x2="717.5" y2="256.6" stroke="#000"/>
<line x1="723.5" y1="274.7" x2="717.5" y2="256.6" stroke="#0ff" stroke-dasharray="3,3"/>
<line x1="729.5" y1="277.6" x2="723.5" y2="256.6" stroke="#000"/>
<line x1="729.5" y1="277.6" x2="723.5" y2="256.6" stroke="#0ff" stroke-dasharray="3,3"/>
<line x1="735.5" y1="280" x2="729.5" y2="257.7" stroke="#000"/>
<line x1="735.5" y1="280" x2="729.5" y2="257.7" stroke="#0ff" stroke-dasharray="3,3"/>
<line x1="741.5" y1="280" x2="735.5" y2="262.2" stroke="#000"/>
<line x1="741.5" y1="280" x2="735.5" y2="262.2" stroke="#0ff" stroke-dasharray="3,3"/>
<line x1="747.5" y1="280" x2="741.5" y2="270" stroke="#000"/>
<line x1="747.5" y1="280" x2="741.5" y2="270" stroke="#0ff" stroke-dasharray="3,3"/>
<line x1="753.5" y1="280.3" x2="747.5" y2="278" stroke="#000"/>
<line x1="753.5" y1="280.3" x2="747.5" y2="278" stroke="#0ff" stroke-dasharray="3,3"/>
<line x1="777.5" y1="279.6" x2="771.5" y2="281.7" stroke="#000"/>
<line x1="777.5" y1="279.6" x2="771.5" y2="281.7" stroke="#0ff" stroke-dasharray="3,3"/>
<line x1="783.5" y1="275.1" x2="777.5" y2="282" stroke="#000"/>
<line x1="783.5" y1="275.1" x2="777.5" y2="282" stroke="#0ff" stroke-dasharray="3,3"/>
<line x1="789.5" y1="272.6" x2="783.5" y2="282" stroke="#000"/>
<line x1="789.5" y1="272.6" x2="783.5" y2="282" stroke="#0ff" stroke-dasharray="3,3"/>
<line x1="795.5" y1="271.9" x2="789.5" y2="282" stroke="#000"/>
<line x1="795.5" y1="271.9" x2="789.5" y2="282" stroke="#0ff" stroke-dasharray="3,3"/>
<line x1="801.5" y1="271.9" x2="795.5" y2="282" stroke="#000"/>
<line x1="801.5" y1="271.9" x2="795.5" y2="282" stroke="#0ff" stroke-dasharray="3,3"/>
<line x1="807.5" y1="270" x2="801.5" y2="282" stroke="#000"/>
<line x1="807.5" y1="270" x2="801.5" y2="282" stroke="#0ff" stroke-dasharray="3,3"/>
<line x1="813.5" y1="261.9" x2="807.5" y2="282" stroke="#000"/>
<line x1="813.5" y1="261.9" x2="807.5" y2="282" stroke="#0ff" stroke-dasharray="3,3"/>
<line x1="819.5" y1="252.3" x2="813.5" y2="278" stroke="#000"/>
<line x1="819.5" y1="252.3" x2="813.5" y2="278" stroke="#0ff" stroke-dasharray="3,3"/>
<line x1="825.5" y1="250.6" x2="819.5" y2="269.8" stroke="#000"/>
<line x1="825.5" y1="250.6" x2="819.5" y2="269.8" stroke="#0ff" stroke-dasharray="3,3"/>
<line x1="831.5" y1="249.6" x2="825.5" y2="269.8" stroke="#000"/>
<line x1="831.5" y1="249.6" x2="825.5" y2="269.8" stroke="#0ff" stroke-dasharray="3,3"/>
<line x1="837.5" y1="248.9" x2="831.5" y2="269.8" stroke="#000"/>
<line x1="837.5" y1="248.9" x2="831.5" y2="269.8" stroke="#0ff" stroke-dasharray="3,3"/>
<line x1="843.5" y1="247.8" x2="837.5" y2="269.1" stroke="#000"/>
<line x1="843.5" y1="247.8" x2="837.5" y2="269.1" stroke="#0ff" stroke-dasharray="3,3"/>
<line x1="849.5" y1="246.4" x2="843.5" y2="266.6" stroke="#000"/>
<line x1="849.5" y1="246.4" x2="843.5" y2="266.6" stroke="#0ff" stroke-dasharray="3,3"/>
<line x1="855.5" y1="235.8" x2="849.5" y2="261.6" stroke="#000"/>
<line x1="855.5" y1="235.8" x2="849.5" y2="261.6" stroke="#0ff" stroke-dasharray="3,3"/>
<line x1="861.5" y1="218.9" x2="855.5" y2="249.5" stroke="#000"/>
<line x1="861.5" y1="218.9" x2="855.5" y2="249.5" stroke="#0ff" stroke-dasharray="3,3"/>
<line x1="867.5" y1="208" x2="861.5" y2="238.2" stroke="#000"/>
<line x1="867.5" y1="208" x2="861.5" y2="238.2" stroke="#0ff" stroke-dasharray="3,3"/>
<line x1="873.5" y1="206.7" x2="867.5" y2="236.3" stroke="#000"/>
<line x1="873.5" y1="206.7" x2="867.5" y2="236.3" stroke="#0ff" stroke-dasharray="3,3"/>
<line x1="879.5" y1="206.7" x2="873.5" y2="235.6" stroke="#000"/>
<line x1="879.5" y1="206.7" x2="873.5" y2="235.6" stroke="#0ff" stroke-dasharray="3,3"/>
<line x1="885.5" y1="205.6" x2="879.5" y2="235.6" stroke="#000"/>
<line x1="885.5" y1="205.6" x2="879.5" y2="235.6" stroke="#0ff" stroke-dasharray="3,3"/>
<line x1="891.5" y1="201.4" x2="885.5" y2="235.6" stroke="#000"/>
<line x1="891.5" y1="201.4" x2="885.5" y2="235.6" stroke="#0ff" stroke-dasharray="3,3"/>
<line x1="897.5" y1="197.1" x2="891.5" y2="231" stroke="#000"/>
<line x1="897.5" y1="197.1" x2="891.5" y2="231" stroke="#0ff" stroke-dasharray="3,3"/>
<line x1="903.5" y1="192.4" x2="897.5" y2="230" stroke="#000"/>
<line x1="903.5" y1="192.4" x2="897.5" y2="230" stroke="#0ff" stroke-dasharray="3,3"/>
<polyline points="9.5,273.5 17.5,278.5 25.5,281.5 33.5,289.5 48.5,289.5 52.5,293.5 54.5,322.5 56.5,357.5 58.5,371.5 63.5,381.5 71.5,383.5 77.5,386 165.5,386 169,385.5 174.5,378.5 181.8,362.8 193.2,344.3 201.7,325.8 211.7,318.7 221.5,314.5 235.8,311.5 261.5,311 268.5,301.5 275.7,287.5 285.5,268.9 292.7,257.5 305.5,253.3 318.3,244.7 332.5,235.5 338.3,233.3 350.5,233.3 373.2,234.5 376,224.5 380.3,207.5 386,198.9 395.9,191.8 413,188.1 430.1,188.1 437.2,197.5 450,204.5 464.2,204.5 469.9,210.3 475.5,221.7 482.7,231.7 489.8,238.8 498.5,244.5 503.5,248.9 535.5,248.9 537.5,241.1 699.5,241.1 700.5,247.9 703.5,253 708.8,257.1 727.2,257.1 733.3,260.1 739.4,267.3 745.5,276.5 749.5,280.5 776.1,281.5 780.1,277.5 787.3,273.4 794.5,272.4 804.5,272.4 809.5,269.3 814.8,260.1 818.8,253 826,251 833.1,249.9 841.2,248.9 849.5,246.9 853.5,241.8 856.5,233.5 859.5,224.5 863.5,214.3 867.7,208.2 873.8,207.2 884,207.2 891.2,202.1 898.3,197 903.5,192.9" fill="none" stroke="#000" stroke-width="1"/>
<polyline points="9.5,424.5 27.1,423.3 40.5,413.5 60.5,418.5 70.5,420.5 83.5,420.5 93.5,430 104.5,431.5 113,441.5 123.9,440.2 132.5,432.9 134.5,423.3 145.5,412.5 159,406.3 167.5,391.5 169,385.5 190.5,385.5 197.5,372.5 206,364.2 262.9,364.2 270,355.5 278.5,348.5 287.1,345.5 292.5,335.5 305.5,327.5 321.2,327.5 332.5,315.5 338.3,314.5 350.5,313.5 378.9,309.9 383.1,304.2 387.5,290 424.5,289.5 430.1,284.3 442.9,270.1 447.5,268.9 454.5,266 460.3,261.5 464.2,255.8 476.5,248.9 503.5,248.9 504.5,251.1 510.1,254.5 516.5,258.2 524.3,263.2 530,266 536.1,267.5 544.5,270.3 547.5,277.5 551.5,278.8 568.5,273.8 574.5,270.3 580.2,273.8 585.8,274.5 592.2,272.5 600.1,277.5 605.8,278.1 619,278.8 625.5,281.5 634.5,286.5 641.5,288 653.1,287.3 660.2,282.3 670.2,277.4 675.9,273.8 685.8,272.4 698.5,274.5 721.1,274 728.2,277.5 734.3,280.5 749.5,280.5 776.1,282.5 808.5,282.5 814.8,277.5 817.8,270.3 833.1,270.3 839.2,269.3 845.3,266.2 851.5,260.1 854.5,252 857.5,245.9 861.5,238.7 869.8,236.1 886.1,236.1 891.2,231.5 897.3,230.5 903.5,229.5" fill="none" stroke="#000" stroke-width="1"/>
<polyline points="9.5,273.5 17.5,278.5 25.5,281.5 33.5,289.5 48.5,289.5 52.5,293.5 54.5,322.5 56.5,357.5 58.5,371.5 63.5,381.5 71.5,383.5 77.5,386 165.5,386 169,385.5 174.5,378.5 181.8,362.8 193.2,344.3 201.7,325.8 211.7,318.7 221.5,314.5 235.8,311.5 261.5,311 268.5,301.5 275.7,287.5 285.5,268.9 292.7,257.5 305.5,253.3 318.3,244.7 332.5,235.5 338.3,233.3 350.5,233.3 373.2,234.5 376,224.5 380.3,207.5 386,198.9 395.9,191.8 413,188.1 430.1,188.1 437.2,197.5 450,204.5 464.2,204.5 469.9,210.3 475.5,221.7 482.7,231.7 489.8,238.8 498.5,244.5 503.5,248.9 535.5,248.9 537.5,241.1 699.5,241.1 700.5,247.9 703.5,253 708.8,257.1 727.2,257.1 733.3,260.1 739.4,267.3 745.5,276.5 749.5,280.5 776.1,281.5 780.1,277.5 787.3,273.4 794.5,272.4 804.5,272.4 809.5,269.3 814.8,260.1 818.8,253 826,251 833.1,249.9 841.2,248.9 849.5,246.9 853.5,241.8 856.5,233.5 859.5,224.5 863.5,214.3 867.7,208.2 873.8,207.2 884,207.2 891.2,202.1 898.3,197 903.5,192.9" fill="none" stroke="#f0f" stroke-width="1" stroke-dasharray="9,6,3,6"/>
<polyline points="9.5,424.5 27.1,423.3 40.5,413.5 60.5,418.5 70.5,420.5 83.5,420.5 93.5,430 104.5,431.5 113,441.5 123.9,440.2 132.5,432.9 134.5,423.3 145.5,412.5 159,406.3 167.5,391.5 169,385.5 190.5,385.5 197.5,372.5 206,364.2 262.9,364.2 270,355.5 278.5,348.5 287.1,345.5 292.5,335.5 305.5,327.5 321.2,327.5 332.5,315.5 338.3,314.5 350.5,313.5 378.9,309.9 383.1,304.2 387.5,290 424.5,289.5 430.1,284.3 442.9,270.1 447.5,268.9 454.5,266 460.3,261.5 464.2,255.8 476.5,248.9 503.5,248.9 504.5,251.1 510.1,254.5 516.5,258.2 524.3,263.2 530,266 536.1,267.5 544.5,270.3 547.5,277.5 551.5,278.8 568.5,273.8 574.5,270.3 580.2,273.8 585.8,274.5 592.2,272.5 600.1,277.5 605.8,278.1 619,278.8 625.5,281.5 634.5,286.5 641.5,288 653.1,287.3 660.2,282.3 670.2,277.4 675.9,273.8 685.8,272.4 698.5,274.5 721.1,274 728.2,277.5 734.3,280.5 749.5,280.5 776.1,282.5 808.5,282.5 814.8,277.5 817.8,270.3 833.1,270.3 839.2,269.3 845.3,266.2 851.5,260.1 854.5,252 857.5,245.9 861.5,238.7 869.8,236.1 886.1,236.1 891.2,231.5 897.3,230.5 903.5,229.5" fill="none" stroke="#f0f" stroke-width="1" stroke-dasharray="9,6,3,6"/>
</g>
<polyline points="9.5,414.5 15.5,404.5 21.5,392.5 27.5,380.5 33.5,367.5 39.5,365.2 45.5,355.5 51.5,344.5 57.5,343.5 63.5,343.5 69.5,343 75.5,342.2 81.5,331.5 87.5,331.3 93.5,331.3 99.5,331.3 105.5,331.3 111.5,331.3 117.5,324.5 123.5,316.5 129.5,310.5 135.5,304.5 141.5,292.5 147.5,289.5 153.5,282.8 159.5,283 165.5,274.8 171.5,269.1 177.5,269.1 183.5,260.9 189.5,260.9 195.5,260.9 201.5,260.9 207.5,260.9 213.5,260.9 219.5,260.9 225.5,260.9 231.5,216.6 237.5,216.6 243.5,203.9 249.5,203.9 255.5,203.9 261.5,199 267.5,194 273.5,194 279.5,194 285.5,195.4 291.5,195.4 297.5,195.4 303.5,197.6 309.5,197.6 315.5,197.6 321.5,204.4 327.5,210.5 333.5,221.1 339.5,221.1 345.5,221.1 351.5,231.8 357.5,236.7 363.5,236.7 369.5,237.5 375.5,240.5 381.5,241.4 387.5,242.4 393.5,246.4 399.5,256.9 405.5,256.9 411.5,256.9 417.5,256.9 423.5,256.9 429.5,262.8 435.5,270.9 441.5,279.3 447.5,279.3 453.5,279.3 459.5,279.3 465.5,279.3 471.5,283.1 477.5,283.1 483.5,283.1 489.5,283.1 495.5,283.1 501.5,283.1 507.5,283.1 513.5,283.1 519.5,283.1 525.5,283.1 531.5,283.1 537.5,281.4 543.5,279.1 549.5,279.1 555.5,279.1 561.5,279.1 567.5,279.1 573.5,279.1 579.5,281.8 585.5,283.9 591.5,283.9 597.5,283.9 603.5,283.9 609.5,277.1 615.5,274 621.5,274 627.5,274 633.5,274 639.5,274 645.5,274 651.5,274 657.5,274 663.5,266.2 669.5,255.8 675.5,255.8 681.5,255.8 687.5,255.8 693.5,255.8 699.5,253.7 705.5,241.6 711.5,228.4 717.5,226.3 723.5,226.3 729.5,226.3 735.5,223.2 741.5,217.8 747.5,217.8 753.5,216.6" fill="none" stroke="#0ff" stroke-width="1"/>
<polyline points="9.5,399.1 15.5,387.5 21.5,373.5 27.5,364.5 33.5,350.5 39.5,336.1 45.5,322.5 51.5,305.5 57.5,303.9 63.5,295.6 69.5,285.4 75.5,289.9 81.5,289.9 87.5,289.9 93.5,289.9 99.5,289.9 105.5,291.6 111.5,291.6 117.5,280 123.5,276.1 129.5,241.1 135.5,241.1 141.5,225.8 147.5,225.8 153.5,224.4 159.5,219.4 165.5,214.4 171.5,214.4 177.5,214.4 183.5,206.4 189.5,206.4 195.5,206.4 201.5,206.4 207.5,206.4 213.5,203.9 219.5,203.9 225.5,196.2 231.5,180.4 237.5,180.4 243.5,179.1 249.5,179.1 255.5,179.1 261.5,182.5 267.5,182.5 273.5,182.5 279.5,182.5 285.5,196.4 291.5,200.4 297.5,210.9 303.5,213 309.5,213 315.5,213 321.5,219.9 327.5,231.8 333.5,250.6 339.5,258.9 345.5,258.9 351.5,269.7 357.5,274.6 363.5,274.6 369.5,285.3 375.5,290.9 381.5,293.8 387.5,293.8 393.5,293.8 399.5,305.4 405.5,294.5 411.5,294.5 417.5,292.5 423.5,283.1 429.5,283.1 435.5,281.4 441.5,262.2 447.5,272.2 453.5,279.1 459.5,279.1 465.5,279.1 471.5,279.1 477.5,281.8 483.5,293.8 489.5,293.8 495.5,293.8 501.5,293.8 507.5,285.8 513.5,276 519.5,276 525.5,265.8 531.5,265.4 537.5,265.4 543.5,269.4 549.5,269.4 555.5,269.4 561.5,269.4 567.5,269.4 573.5,269.4 579.5,278.9 585.5,278.9 591.5,278.9 597.5,278.9 603.5,278.9 609.5,279.2 615.5,285.2 621.5,286.9 627.5,286.9 633.5,278.8 639.5,272.8 645.5,272.8 651.5,271.5 657.5,269 663.5,259.3 669.5,248.9 675.5,245.9 681.5,245.9 687.5,240.9 693.5,240.9 699.5,238.8 705.5,224.7 711.5,204.5 717.5,189.7 723.5,187.6 729.5,187.6 735.5,187.6 741.5,181.8 747.5,174.6 753.5,169.2" fill="none" stroke="#f00" stroke-width="1" stroke-dasharray="18,6"/>
<polyline points="9.5,119.7 26.1,124.8 51.7,132.5 77.3,141.5 102.9,147.9 128.5,154.3 154.1,160.7 173.3,163.9 184,166.8 204.5,171 214.5,172.7 225.9,176 245.8,178.2 264.5,181.5 280.5,184 293.2,186.1 307.5,189.7 317.4,193.3 330.2,196.8 341.5,201.1 358.9,208.9 380.3,216 401.5,221.1 424.4,225.1 450,230.2 472.5,235.4 492.5,238.8 512.5,243 533.2,246.8 544.5,249.7 557.5,251.8 568.5,254.5 580.2,257.5 591.5,260.3 602.9,263.2 614.5,265.3 621.5,268.8 636.1,271.5 647.5,275.2 661.5,278.1 674.5,280.5 688.5,281.5 700.1,283 749.5,288.5 753.5,288.8" fill="none" stroke="#0f0" stroke-width="1" stroke-dasharray="9,3,3,3,3,3"/>
<g fill="#f00" stroke="#f00" stroke-width="0.3" text-anchor="middle">
<text transform="scale(0.9,1)" x="50.6 56.1 61.7 67.2" y="204" font-size="10">7/25</text>
</g>
<g fill="#f00" stroke="#f00" stroke-width="0.3" text-anchor="middle">
<text transform="scale(0.9,1)" x="45 50.6 56.1 61.7 67.2" y="216" font-size="10">15885</text>
</g>
<g fill="#0ff" stroke="#0ff" stroke-width="0.3" text-anchor="middle">
<text transform="scale(0.9,1)" x="76.1 81.7 87.2 92.8" y="370.3" font-size="10">7/31</text>
</g>
<g fill="#0ff" stroke="#0ff" stroke-width="0.3" text-anchor="middle">
<text transform="scale(0.9,1)" x="71.1 76.7 82.2 87.8 93.3" y="382.3" font-size="10">14550</text>
</g>
<polyline points="9.5,222.6 15.5,217.7 21.5,228.7 27.5,196.7 33.5,197.4 39.5,213 45.5,191.4 51.5,200.9 57.5,200.9 63.5,200.2 69.5,198.1 75.5,189.5 81.5,146.2 87.5,154 93.5,191.4 99.5,186.4 105.5,196 111.5,205.2 117.5,185.3 123.5,180.7 129.5,196.5 135.5,235.5 141.5,239.5 147.5,229.4 153.5,240.6 159.5,229.9 165.5,235.9 171.5,247.5 177.5,260.6 183.5,299.3 189.5,254.1 195.5,265.7 201.5,309.2 207.5,321.2 213.5,315.2 219.5,314 225.5,338.6 231.5,326.3 237.5,285 243.5,284.5 249.5,273.4 255.5,263.2 261.5,257.7 267.5,259.4 273.5,229.4 279.5,257.2 285.5,292.2 291.5,293 297.5,314 303.5,319.5 309.5,298.7 315.5,303.3 321.5,291.8 327.5,288.8 333.5,274.3 339.5,257.2 345.5,276.8 351.5,266.6 357.5,265.7 363.5,252.1 369.5,271.7 375.5,274.3 381.5,265.7 387.5,286.2 393.5,280.2 399.5,271.7 405.5,255.5 411.5,270 417.5,259.6 423.5,276 429.5,297.3 435.5,294.5 441.5,293.8 447.5,304.4 453.5,278.8 459.5,280.2 465.5,275.3 471.5,278.8 477.5,283.1 483.5,257.5 489.5,263.2 495.5,280.2 501.5,278.8 507.5,267.4 513.5,226.9 519.5,217.3 525.5,212.2 531.5,223 537.5,223 543.5,230.9 549.5,205.9 555.5,177.4 561.5,164.1 567.5,171.8 573.5,180.3 579.5,168.9 585.5,187.4 591.5,166.1 597.5,186 603.5,204.1" fill="none" stroke="#0f0" stroke-width="2.2" stroke-linejoin="round"/>
<g id="macd">
<rect x="9" y="547.2" width="2" height="9.8" fill="#0ff"/>
<rect x="15" y="546.6" width="2" height="10.4" fill="#0ff"/>
<rect x="21" y="546" width="2" height="11" fill="#0ff"/>
<rect x="27" y="545.4" width="2" height="11.6" fill="#0ff"/>
<rect x="33" y="545.4" width="2" height="11.6" fill="#0ff"/>
<rect x="39" y="545.2" width="2" height="11.8" fill="#0ff"/>
<rect x="45" y="544.4" width="2" height="12.6" fill="#0ff"/>
<rect x="51" y="542.8" width="2" height="14.2" fill="#0ff"/>
<rect x="57" y="546.1" width="2" height="10.9" fill="#0ff"/>
<rect x="63" y="548.9" width="2" height="8.1" fill="#0ff"/>
<rect x="69" y="551.2" width="2" height="5.8" fill="#0ff"/>
<rect x="75" y="556" width="2" height="2.3" fill="#0ff"/>
<rect x="81" y="556" width="2" height="2.7" fill="#0ff"/>
<rect x="87" y="556" width="2" height="2.1" fill="#0ff"/>
<rect x="93" y="554.9" width="2" height="2.1" fill="#0ff"/>
<rect x="99" y="553.7" width="2" height="3.3" fill="#0ff"/>
<rect x="105" y="553.1" width="2" height="3.9" fill="#0ff"/>
<rect x="111" y="552.2" width="2" height="4.8" fill="#0ff"/>
<rect x="117" y="550.9" width="2" height="6.1" fill="#0ff"/>
<rect x="123" y="549.7" width="2" height="7.3" fill="#0ff"/>
<rect x="129" y="550.8" width="2" height="6.2" fill="#0ff"/>
<rect x="135" y="551.8" width="2" height="5.2" fill="#0ff"/>
<rect x="141" y="552.7" width="2" height="4.3" fill="#0ff"/>
<rect x="147" y="552.8" width="2" height="4.2" fill="#0ff"/>
<rect x="153" y="553.5" width="2" height="3.5" fill="#0ff"/>
<rect x="159" y="556" width="2" height="2.1" fill="#0ff"/>
<rect x="165" y="556" width="2" height="3.5" fill="#0ff"/>
<rect x="171" y="556" width="2" height="4.5" fill="#0ff"/>
<rect x="177" y="556" width="2" height="4.6" fill="#0ff"/>
<rect x="183" y="556" width="2" height="5.5" fill="#0ff"/>
<rect x="189" y="556" width="2" height="5.2" fill="#0ff"/>
<rect x="195" y="556" width="2" height="4.3" fill="#0ff"/>
<rect x="201" y="556" width="2" height="4" fill="#0ff"/>
<rect x="207" y="556" width="2" height="4.4" fill="#0ff"/>
<rect x="213" y="556" width="2" height="4.9" fill="#0ff"/>
<rect x="219" y="556" width="2" height="4.4" fill="#0ff"/>
<rect x="225" y="556" width="2" height="4.1" fill="#0ff"/>
<rect x="231" y="556" width="2" height="2.8" fill="#0ff"/>
<rect x="237" y="554.9" width="2" height="2.1" fill="#0ff"/>
<rect x="243" y="556" width="2" height="2.7" fill="#0ff"/>
<rect x="249" y="556" width="2" height="3.3" fill="#0ff"/>
<rect x="255" y="556" width="2" height="4.1" fill="#0ff"/>
<rect x="261" y="556" width="2" height="5.4" fill="#0ff"/>
<rect x="267" y="556" width="2" height="5.8" fill="#0ff"/>
<rect x="273" y="556" width="2" height="5.5" fill="#0ff"/>
<rect x="279" y="556" width="2" height="6.9" fill="#0ff"/>
<rect x="285" y="556" width="2" height="7.8" fill="#0ff"/>
<rect x="291" y="556" width="2" height="9.1" fill="#0ff"/>
<rect x="297" y="556" width="2" height="10" fill="#0ff"/>
<rect x="303" y="556" width="2" height="9.7" fill="#0ff"/>
<rect x="309" y="556" width="2" height="8.4" fill="#0ff"/>
<rect x="315" y="556" width="2" height="6.7" fill="#0ff"/>
<rect x="321" y="556" width="2" height="5.8" fill="#0ff"/>
<rect x="327" y="556" width="2" height="6.8" fill="#0ff"/>
<rect x="333" y="556" width="2" height="9.4" fill="#0ff"/>
<rect x="339" y="556" width="2" height="7.7" fill="#0ff"/>
<rect x="345" y="556" width="2" height="6.7" fill="#0ff"/>
<rect x="351" y="556" width="2" height="7.9" fill="#0ff"/>
<rect x="357" y="556" width="2" height="9" fill="#0ff"/>
<rect x="363" y="556" width="2" height="9.5" fill="#0ff"/>
<rect x="369" y="556" width="2" height="9.3" fill="#0ff"/>
<rect x="375" y="556" width="2" height="9.7" fill="#0ff"/>
<rect x="381" y="556" width="2" height="8" fill="#0ff"/>
<rect x="387" y="556" width="2" height="5.7" fill="#0ff"/>
<rect x="393" y="556" width="2" height="2.3" fill="#0ff"/>
<rect x="399" y="552.8" width="2" height="4.2" fill="#0ff"/>
<rect x="405" y="550.4" width="2" height="6.6" fill="#0ff"/>
<rect x="411" y="549.4" width="2" height="7.6" fill="#0ff"/>
<rect x="417" y="548" width="2" height="9" fill="#0ff"/>
<rect x="423" y="545.7" width="2" height="11.3" fill="#0ff"/>
<rect x="429" y="547.3" width="2" height="9.7" fill="#0ff"/>
<rect x="435" y="549.2" width="2" height="7.8" fill="#0ff"/>
<rect x="441" y="552.4" width="2" height="4.6" fill="#0ff"/>
<rect x="447" y="554.9" width="2" height="2.1" fill="#0ff"/>
<rect x="453" y="556" width="2" height="3.2" fill="#0ff"/>
<rect x="459" y="556" width="2" height="3.6" fill="#0ff"/>
<rect x="465" y="556" width="2" height="3.7" fill="#0ff"/>
<rect x="471" y="556" width="2" height="2.9" fill="#0ff"/>
<rect x="477" y="556" width="2" height="2.1" fill="#0ff"/>
<rect x="483" y="554.1" width="2" height="2.9" fill="#0ff"/>
<rect x="489" y="552.2" width="2" height="4.8" fill="#0ff"/>
<rect x="495" y="551.4" width="2" height="5.6" fill="#0ff"/>
<rect x="501" y="550.9" width="2" height="6.1" fill="#0ff"/>
<rect x="507" y="550.8" width="2" height="6.2" fill="#0ff"/>
<rect x="513" y="550.9" width="2" height="6.1" fill="#0ff"/>
<rect x="519" y="551.4" width="2" height="5.6" fill="#0ff"/>
<rect x="525" y="552.4" width="2" height="4.6" fill="#0ff"/>
<rect x="531" y="553.3" width="2" height="3.7" fill="#0ff"/>
<rect x="537" y="554.6" width="2" height="2.4" fill="#0ff"/>
<rect x="543" y="556" width="2" height="2.1" fill="#0ff"/>
<rect x="549" y="556" width="2" height="2.1" fill="#0ff"/>
<rect x="555" y="554.4" width="2" height="2.6" fill="#0ff"/>
<rect x="561" y="554.2" width="2" height="2.8" fill="#0ff"/>
<rect x="567" y="554.4" width="2" height="2.6" fill="#0ff"/>
<rect x="573" y="554.9" width="2" height="2.1" fill="#0ff"/>
<rect x="579" y="556" width="2" height="2.4" fill="#0ff"/>
<rect x="585" y="556" width="2" height="3.2" fill="#0ff"/>
<rect x="591" y="556" width="2" height="3.9" fill="#0ff"/>
<rect x="597" y="556" width="2" height="3.6" fill="#0ff"/>
<rect x="603" y="556" width="2" height="3.2" fill="#0ff"/>
<rect x="609" y="556" width="2" height="2.6" fill="#0ff"/>
<rect x="615" y="554.9" width="2" height="2.1" fill="#0ff"/>
<rect x="621" y="554.2" width="2" height="2.8" fill="#0ff"/>
<rect x="627" y="552.9" width="2" height="4.1" fill="#0ff"/>
<rect x="633" y="552.4" width="2" height="4.6" fill="#0ff"/>
<rect x="639" y="552.7" width="2" height="4.3" fill="#0ff"/>
<rect x="645" y="552.9" width="2" height="4.1" fill="#0ff"/>
<rect x="651" y="553" width="2" height="4" fill="#0ff"/>
<rect x="657" y="552.4" width="2" height="4.6" fill="#0ff"/>
<rect x="663" y="550.3" width="2" height="6.7" fill="#0ff"/>
<rect x="669" y="548.3" width="2" height="8.7" fill="#0ff"/>
<rect x="675" y="548.2" width="2" height="8.8" fill="#0ff"/>
<rect x="681" y="548.2" width="2" height="8.8" fill="#0ff"/>
<rect x="687" y="548.7" width="2" height="8.3" fill="#0ff"/>
<rect x="693" y="549.6" width="2" height="7.4" fill="#0ff"/>
<rect x="699" y="550.2" width="2" height="6.8" fill="#0ff"/>
<rect x="705" y="548.9" width="2" height="8.1" fill="#0ff"/>
<rect x="711" y="548.6" width="2" height="8.4" fill="#0ff"/>
<rect x="717" y="547.8" width="2" height="9.2" fill="#0ff"/>
<rect x="723" y="548.5" width="2" height="8.5" fill="#0ff"/>
<rect x="729" y="550.1" width="2" height="6.9" fill="#0ff"/>
<rect x="735" y="551.8" width="2" height="5.2" fill="#0ff"/>
<rect x="741" y="552.9" width="2" height="4.1" fill="#0ff"/>
<rect x="747" y="553.8" width="2" height="3.2" fill="#0ff"/>
<rect x="753" y="556" width="2" height="2.3" fill="#0ff"/>
<polyline points="9.8,557.7 19,554 28.3,550.3 37.5,546.5 46.8,542.9 54.2,539.2 61.5,536.4 70.9,534.2 80.1,533.1 93.1,531.8 107.9,531.2 120.9,530.5 130.1,528.1 141.2,526.5 157.9,526.2 172.5,526.8 185.5,528.1 190.5,529 205.3,531.8 222,533.6 238.5,534.2 253.5,536.4 268.3,537.9 281.2,539.2 290.5,542.9 301.5,546.6 312.5,550.3 323.8,554 334.9,557.7 346.1,561.4 357.2,565.1 368.3,568.8 379.5,572.5 389.8,574.4 399,575.7 408.3,575.3 417.5,573.1 426.8,570.1 436.1,567.5 445.3,565.7 454.5,564.2 465.5,563.8 476.8,565.1 487.9,565.1 499,564.5 510.1,562.4 519.5,560.5 528.5,559 537.9,557.7 547.2,557.2 558.3,556.8 569.5,556.4 581.5,557.2 592.5,557.7 607.5,558.6 618.5,559 629.5,560.1 644.5,559 655.5,558.3 666.5,556.8 677.9,554.5 689,552.7 700.1,549.8 711.2,545.7 722.4,543.5 733.5,540.1 742.5,538.6 753.5,537.4" fill="none" stroke="#0f0" stroke-width="1" stroke-dasharray="9,3,3,3,3,3"/>
<polyline points="9.8,549.4 19,544.8 28.3,540.1 37.5,536.4 44.9,532.7 52,527.5 59.8,529 69,529.9 75.5,534.5 80.1,534.5 89.4,532.4 98.5,529.9 107.9,528.5 115.3,526.8 123.5,524 130.1,523.5 152.4,523.8 159.8,526.8 169,529.5 178.3,530.5 185.5,532.4 194.9,532.7 201.5,533.6 212.5,536.1 227.5,536.4 236.8,533.6 244.2,536.4 253.5,538.6 264.5,542 273.8,542.4 283.1,545.7 290.5,550.3 297.9,554 305.3,555.9 320.1,556.8 327.5,560.5 333.1,565.1 344.2,565.7 353.5,570.7 360.9,574.4 370.1,577.2 375.5,579.4 383.1,579.4 387.9,578.1 395.3,574.9 404.5,570.7 415.7,567 423.1,561.4 434.2,560.9 441.5,563.3 450.9,566.1 462,566.1 478.5,565.7 487.9,562 500.9,559.6 510.1,557.7 517.5,556.4 536.1,556.4 539.8,557.7 549,557.7 556.5,555.5 570.5,555.3 577.9,557.7 590.9,560.1 607.5,560.1 618.5,558.3 631.5,556.8 644.5,556.4 655.5,555.9 663.1,552.2 670.5,548.5 681.5,546.6 698.3,545.3 707.5,540.1 718.5,536.4 729.8,535.9 748.3,536.4 753.8,538.3" fill="none" stroke="#f00" stroke-width="2.4" stroke-linejoin="round"/>
</g>
<g id="rsi">
<polyline points="9.8,641.1 17.2,634.5 26.5,630.9 33.8,628.5 40.3,633.1 49.5,626.2 54.2,632.7 57,650.3 63.5,653.5 69.9,655.9 76.5,667 81.1,654 93.1,647.5 111.5,645.5 123.5,638.5 130.1,643.8 135.5,649.8 142.2,643.5 154.2,646.1 159.8,654.9 167.2,654.5 173.5,657.7 178.3,649 189.5,654 196.1,649.4 207.2,654.9 218.3,654 225.5,650.3 231.2,641.1 236.8,642.9 243.3,657.7 251.5,659 260.9,665.7 266.5,660.5 273.8,654 281.2,664.2 290.5,675.7 297.9,671.5 304.4,674.4 312.7,669.4 322,674.4 328.5,679.9 334,686.1 338.5,669.8 346.1,670.7 352.5,679.9 359,681.8 368.3,678.5 376.5,683.5 383.1,675.3 387.9,664.2 399,660.5 408.3,654.9 416.5,655.9 424,649.8 430.5,661.5 436.1,667.9 441.5,668.3 450.9,675.3 454.5,675.3 460.1,666.1 467.5,667 473.1,663.3 480.5,664.2 488.8,654 495.3,660.1 502.7,656.5 508.3,656.8 513.8,654 520.3,661.5 526.8,660.5 531.5,659 537.9,667 547.2,662.4 555.5,655.3 561.1,662 567.5,658.3 574,663.3 578.8,670.7 587.2,669.8 596.5,671.5 603.8,659.5 613.1,660.1 619.5,660.1 627.9,663.3 632.5,654 638.1,654 644.5,662.4 653.8,662.7 658.5,656.8 663.1,646.5 668.5,641.1 676.1,639.8 681.5,648.5 689,649 693.5,654 699.2,644.8 705.5,640.1 712.2,634.2 718.5,640.5 724.2,646.1 729.8,643.8 736.2,652.7 741.8,645.7 749.2,657.7 753.8,659.5" fill="none" stroke="#0ff" stroke-width="1" stroke-dasharray="18,6"/>
<polyline points="9.8,649.8 19,644.8 28.3,641.5 33.8,638.5 41.2,639.8 51.5,633.5 54.2,638.3 57,649.4 63.5,652.2 69.9,654.9 76.5,664.2 80.1,655.9 83.8,651.5 94.9,648.5 111.5,646.5 122.5,642.9 128.3,643.8 135.5,649 142.2,644.8 146.8,647.2 154.2,647.2 159.8,651.5 170.9,654 178.3,649.8 189.5,653.5 196.1,650.3 201.5,652.7 223.8,652.7 232.2,642.9 237.7,646.5 242.4,654.9 249.8,655.3 260.9,659.5 268.3,655.3 273.8,654.9 279.4,659.5 285.9,667.9 292.4,667.5 297.9,665.7 303.5,667 310.9,664.5 320.1,667.9 327.5,671.5 333.1,678.1 338.5,667.5 344.2,667.9 353.5,675.7 368.3,675.3 375.5,678.1 381.2,674.9 387.9,665.7 397.2,664.2 406.5,660.1 417.5,660.1 424,654 430.5,660.5 436.1,667 441.5,667.5 447.2,671.2 454.5,671.2 460.1,667 467.5,666.5 476.8,664.2 484.2,660.5 489.8,656.5 495.3,660.9 502.7,659.5 508.3,659 513.8,655.9 519.4,660.9 526.8,660.9 531.5,659.5 537.9,665.7 547.2,662 555.5,656.8 561.1,660.9 567.5,658.5 573.1,662.4 577.9,666.5 590.9,666.1 598.3,668.3 603.8,662.4 614.9,660.5 627.9,662.4 633.5,655.3 639,657.7 644.5,662.4 653.8,662 658.5,659 664,649.4 675.1,647.2 681.5,651.5 689,651.5 693.5,654 700.1,648.5 707.5,643.5 713.1,642.4 718.5,643.8 724.2,647.2 729.8,646.1 736.2,651.5 741.8,647.2 748.3,654 753.8,659" fill="none" stroke="#f00" stroke-width="2.4" stroke-linejoin="round"/>
</g>
<g id="labels">
<text x="16" y="23" font-size="24" fill="#fff" text-rendering="auto">上海ゴム</text>
<clipPath id="c1"><rect x="210" y="2" width="810" height="11"/></clipPath>
<clipPath id="c2"><rect x="210" y="14" width="810" height="12"/></clipPath>
<g clip-path="url(#c1)">
<g fill="#fff" stroke="#fff" stroke-width="0.3" text-anchor="middle">
<text x="217 230 249.5 262.5" y="12" font-size="13">日足期近</text>
</g>
<g fill="#fff" stroke="#fff" stroke-width="0.3" text-anchor="middle">
<text transform="scale(0.9,1)" x="335 340.6 346.1 351.7 357.2 362.8 368.3 373.9 390.6 396.1 401.7 407.2 412.8 418.3 423.9 429.4 435 440.6 446.1 451.7 457.2 473.9 479.4 485 490.6 496.1 501.7 507.2 512.8 518.3 523.9 529.4 535 540.6 546.1 551.7 568.3 573.9 579.4 585 590.6 596.1 601.7 607.2 612.8 618.3 623.9 629.4 635 640.6 646.1" y="12" font-size="10">25/07/1626/01/16(125)16480(26/01/14)14320(25/07/16)</text>
<text x="284 294 344 419 504" y="12" font-size="10">期間～高安</text>
</g>
</g>
<g clip-path="url(#c2)">
<g fill="#fff" stroke="#fff" stroke-width="0.3" text-anchor="middle">
<text transform="scale(0.9,1)" x="233.9 239.4 245 250.6 256.1 261.7 267.2 272.8 283.9 289.4 295 300.6 306.1 328.3 333.9 339.4 345 350.6 372.8 378.3 383.9 389.4 395 417.2 422.8 428.3 433.9 439.4 461.7 467.2 472.8 478.3 483.9 506.1 511.7 517.2 522.8 528.3 533.9" y="25" font-size="10">26/01/1626/0516005161151578015835348181</text>
<text x="288 328 368 408 448" y="25" font-size="10">始高安終出</text>
</g>
</g>
<g fill="#0ff" stroke="#0ff" stroke-width="0.3" text-anchor="middle">
<text transform="scale(0.9,1)" x="20.6 26.1 31.7 87.2 92.8 98.3 103.9 109.4 115" y="38" font-size="10">026=15730</text>
<text x="36 51 61 71" y="38" font-size="10">日基準線</text>
</g>
<rect x="16" y="39" width="90" height="1" fill="#0ff"/>
<g fill="#f00" stroke="#f00" stroke-width="0.3" text-anchor="middle">
<text transform="scale(0.9,1)" x="126.1 131.7 137.2 192.8 198.3 203.9 209.4 215 220.6" y="38" font-size="10">009=16130</text>
<text x="131 146 156 166" y="38" font-size="10">日転換線</text>
</g>
<rect x="111" y="39" width="90" height="1" fill="#f00"/>
<g fill="#f0f" stroke="#f0f" stroke-width="0.3" text-anchor="middle">
<text transform="scale(0.9,1)" x="231.7 237.2 242.8 309.4 315 320.6 326.1 331.7 337.2" y="38" font-size="10">026=15189</text>
<text x="226 241 251 261 271" y="38" font-size="10">日先行上限</text>
</g>
<rect x="206" y="39" width="100" height="1" fill="#f0f"/>
<g fill="#f0f" stroke="#f0f" stroke-width="0.3" text-anchor="middle">
<text transform="scale(0.9,1)" x="348.3 353.9 359.4 365 370.6 376.1 381.7 448.3 453.9 459.4 465 470.6 476.1" y="38" font-size="10">052/026=15200</text>
<text x="351 366 376 386 396" y="38" font-size="10">日先行下限</text>
</g>
<rect x="311" y="39" width="120" height="1" fill="#f0f"/>
<g fill="#0f0" stroke="#0f0" stroke-width="0.3" text-anchor="middle">
<text transform="scale(0.9,1)" x="487.2 492.8 498.3 553.9 581.7 587.2 592.8 598.3 603.9 609.4 615" y="38" font-size="10">026()=15835</text>
<text x="456 471 481 491 506 516" y="38" font-size="10">日遅行線終値</text>
</g>
<rect x="436" y="39" width="120" height="1" fill="#0f0"/>
<g fill="#0f0" stroke="#0f0" stroke-width="0.3" text-anchor="middle">
<text transform="scale(0.9,1)" x="20.6 26.1 31.7 103.9 109.4 115 120.6 126.1 131.7 137.2 142.8" y="51" font-size="10">200MA=15116</text>
<text x="36 51 61 71 81" y="51" font-size="10">日終値単純</text>
</g>
<rect x="16" y="52" width="115" height="1" fill="#0f0"/>
<g fill="#fff" stroke="#fff" stroke-width="0.3" text-anchor="middle">
<text transform="scale(0.83,1)" x="1236.1 1243.4 1250.6 1257.8 1265.1" y="65" font-size="12.6">17000</text>
</g>
<g fill="#fff" stroke="#fff" stroke-width="0.3" text-anchor="middle">
<text transform="scale(0.83,1)" x="1236.1 1243.4 1250.6 1257.8 1265.1" y="125" font-size="12.6">16500</text>
</g>
<g fill="#fff" stroke="#fff" stroke-width="0.3" text-anchor="middle">
<text transform="scale(0.83,1)" x="1236.1 1243.4 1250.6 1257.8 1265.1" y="184" font-size="12.6">16000</text>
</g>
<g fill="#fff" stroke="#fff" stroke-width="0.3" text-anchor="middle">
<text transform="scale(0.83,1)" x="1236.1 1243.4 1250.6 1257.8 1265.1" y="243" font-size="12.6">15500</text>
</g>
<g fill="#fff" stroke="#fff" stroke-width="0.3" text-anchor="middle">
<text transform="scale(0.83,1)" x="1236.1 1243.4 1250.6 1257.8 1265.1" y="302" font-size="12.6">15000</text>
</g>
<g fill="#fff" stroke="#fff" stroke-width="0.3" text-anchor="middle">
<text transform="scale(0.83,1)" x="1236.1 1243.4 1250.6 1257.8 1265.1" y="361" font-size="12.6">14500</text>
</g>
<g fill="#fff" stroke="#fff" stroke-width="0.3" text-anchor="middle">
<text transform="scale(0.83,1)" x="1236.1 1243.4 1250.6 1257.8 1265.1" y="420" font-size="12.6">14000</text>
</g>
<g fill="#fff" stroke="#fff" stroke-width="0.3" text-anchor="middle">
<text transform="scale(0.83,1)" x="1236.1 1243.4 1250.6 1257.8 1265.1" y="479" font-size="12.6">13500</text>
</g>
<g fill="#fff" stroke="#fff" stroke-width="0.3" text-anchor="middle">
<text transform="scale(0.83,1)" x="92.8" y="489" font-size="12.6">8</text>
</g>
<g fill="#fff" stroke="#fff" stroke-width="0.3" text-anchor="middle">
<text transform="scale(0.83,1)" x="244.6" y="489" font-size="12.6">9</text>
</g>
<g fill="#fff" stroke="#fff" stroke-width="0.3" text-anchor="middle">
<text transform="scale(0.83,1)" x="400 407.2" y="489" font-size="12.6">10</text>
</g>
<g fill="#fff" stroke="#fff" stroke-width="0.3" text-anchor="middle">
<text transform="scale(0.83,1)" x="522.9 530.1" y="489" font-size="12.6">11</text>
</g>
<g fill="#fff" stroke="#fff" stroke-width="0.3" text-anchor="middle">
<text transform="scale(0.83,1)" x="667.5 674.7" y="489" font-size="12.6">12</text>
</g>
<g fill="#fff" stroke="#fff" stroke-width="0.3" text-anchor="middle">
<text transform="scale(0.83,1)" x="826.5 833.7 841 848.2" y="489" font-size="12.6">26/1</text>
</g>
<g fill="#fff" stroke="#fff" stroke-width="0.3" text-anchor="middle">
<text transform="scale(0.83,1)" x="92.8" y="594.5" font-size="12.6">8</text>
</g>
<g fill="#fff" stroke="#fff" stroke-width="0.3" text-anchor="middle">
<text transform="scale(0.83,1)" x="244.6" y="594.5" font-size="12.6">9</text>
</g>
<g fill="#fff" stroke="#fff" stroke-width="0.3" text-anchor="middle">
<text transform="scale(0.83,1)" x="400 407.2" y="594.5" font-size="12.6">10</text>
</g>
<g fill="#fff" stroke="#fff" stroke-width="0.3" text-anchor="middle">
<text transform="scale(0.83,1)" x="522.9 530.1" y="594.5" font-size="12.6">11</text>
</g>
<g fill="#fff" stroke="#fff" stroke-width="0.3" text-anchor="middle">
<text transform="scale(0.83,1)" x="667.5 674.7" y="594.5" font-size="12.6">12</text>
</g>
<g fill="#fff" stroke="#fff" stroke-width="0.3" text-anchor="middle">
<text transform="scale(0.83,1)" x="826.5 833.7 841 848.2" y="594.5" font-size="12.6">26/1</text>
</g>
<g fill="#fff" stroke="#fff" stroke-width="0.3" text-anchor="middle">
<text transform="scale(0.83,1)" x="92.8" y="699.5" font-size="12.6">8</text>
</g>
<g fill="#fff" stroke="#fff" stroke-width="0.3" text-anchor="middle">
<text transform="scale(0.83,1)" x="244.6" y="699.5" font-size="12.6">9</text>
</g>
<g fill="#fff" stroke="#fff" stroke-width="0.3" text-anchor="middle">
<text transform="scale(0.83,1)" x="400 407.2" y="699.5" font-size="12.6">10</text>
</g>
<g fill="#fff" stroke="#fff" stroke-width="0.3" text-anchor="middle">
<text transform="scale(0.83,1)" x="522.9 530.1" y="699.5" font-size="12.6">11</text>
</g>
<g fill="#fff" stroke="#fff" stroke-width="0.3" text-anchor="middle">
<text transform="scale(0.83,1)" x="667.5 674.7" y="699.5" font-size="12.6">12</text>
</g>
<g fill="#fff" stroke="#fff" stroke-width="0.3" text-anchor="middle">
<text transform="scale(0.83,1)" x="826.5 833.7 841 848.2" y="699.5" font-size="12.6">26/1</text>
</g>
<clipPath id="c3"><rect x="1022" y="500" width="47" height="100"/></clipPath><g clip-path="url(#c3)">
<g fill="#fff" stroke="#fff" stroke-width="0.3" text-anchor="middle">
<text transform="scale(0.83,1)" x="1236.1 1243.4 1250.6 1257.8 1265.1 1272.3 1279.5 1286.7" y="518" font-size="12.6">400.0000</text>
</g>
<g fill="#fff" stroke="#fff" stroke-width="0.3" text-anchor="middle">
<text transform="scale(0.83,1)" x="1236.1 1243.4 1250.6 1257.8 1265.1 1272.3 1279.5 1286.7" y="528" font-size="12.6">300.0000</text>
</g>
<g fill="#fff" stroke="#fff" stroke-width="0.3" text-anchor="middle">
<text transform="scale(0.83,1)" x="1236.1 1243.4 1250.6 1257.8 1265.1 1272.3 1279.5 1286.7" y="537" font-size="12.6">200.0000</text>
</g>
<g fill="#fff" stroke="#fff" stroke-width="0.3" text-anchor="middle">
<text transform="scale(0.83,1)" x="1236.1 1243.4 1250.6 1257.8 1265.1 1272.3 1279.5 1286.7" y="547" font-size="12.6">100.0000</text>
</g>
<g fill="#fff" stroke="#fff" stroke-width="0.3" text-anchor="middle">
<text transform="scale(0.83,1)" x="1236.1 1243.4 1250.6 1257.8 1265.1 1272.3" y="556" font-size="12.6">0.0000</text>
</g>
<g fill="#fff" stroke="#fff" stroke-width="0.3" text-anchor="middle">
<text transform="scale(0.83,1)" x="1236.1 1243.4 1250.6 1257.8 1265.1 1272.3 1279.5 1286.7 1294" y="566" font-size="12.6">-100.0000</text>
</g>
<g fill="#fff" stroke="#fff" stroke-width="0.3" text-anchor="middle">
<text transform="scale(0.83,1)" x="1236.1 1243.4 1250.6 1257.8 1265.1 1272.3 1279.5 1286.7 1294" y="575" font-size="12.6">-200.0000</text>
</g>
<g fill="#fff" stroke="#fff" stroke-width="0.3" text-anchor="middle">
<text transform="scale(0.83,1)" x="1236.1 1243.4 1250.6 1257.8 1265.1 1272.3 1279.5 1286.7 1294" y="584" font-size="12.6">-300.0000</text>
</g>
</g>
<g fill="#fff" stroke="#fff" stroke-width="0.3" text-anchor="middle">
<text transform="scale(0.9,1)" x="71.7 99.4" y="517" font-size="10">()</text>
<text x="22 32 42 52 72 82" y="517" font-size="10">ＭＡＣＤ終値</text>
</g>
<g fill="#f00" stroke="#f00" stroke-width="0.3" text-anchor="middle">
<text transform="scale(0.9,1)" x="116.1 121.7 127.2 132.8 138.3 205 210.6 216.1 221.7 227.2 232.8 238.3 243.9 249.4" y="517.5" font-size="10">12-26=189.5400</text>
<text x="132 147 157 167 177" y="517.5" font-size="10">日ＭＡＣＤ</text>
</g>
<rect x="102" y="518" width="125" height="1" fill="#f00"/>
<g fill="#0f0" stroke="#0f0" stroke-width="0.3" text-anchor="middle">
<text transform="scale(0.9,1)" x="266.1 360.6 366.1 371.7 377.2 382.8 388.3 393.9 399.4 405" y="517.5" font-size="10">9=206.7203</text>
<text x="247 262 272 287 297 307 317" y="517.5" font-size="10">日単純シグナル</text>
</g>
<rect x="232" y="518" width="135" height="1" fill="#0f0"/>
<g fill="#0ff" stroke="#0ff" stroke-width="0.3" text-anchor="middle">
<text transform="scale(0.9,1)" x="416.1 421.7 427.2 432.8 438.3 443.9 449.4 455 460.6 466.1 471.7 477.2 482.8 488.3 493.9 499.4 505 510.6 516.1" y="517.5" font-size="10">MACDｵｼﾚｰﾀｰ=-17.1803</text>
</g>
<rect x="372" y="518" width="95" height="1" fill="#0ff"/>
<g fill="#fff" stroke="#fff" stroke-width="0.3" text-anchor="middle">
<text transform="scale(0.83,1)" x="1236.1 1243.4" y="622" font-size="12.6">90</text>
</g>
<g fill="#fff" stroke="#fff" stroke-width="0.3" text-anchor="middle">
<text transform="scale(0.83,1)" x="1236.1 1243.4" y="632" font-size="12.6">80</text>
</g>
<g fill="#fff" stroke="#fff" stroke-width="0.3" text-anchor="middle">
<text transform="scale(0.83,1)" x="1236.1 1243.4" y="642" font-size="12.6">70</text>
</g>
<g fill="#fff" stroke="#fff" stroke-width="0.3" text-anchor="middle">
<text transform="scale(0.83,1)" x="1236.1 1243.4" y="651" font-size="12.6">60</text>
</g>
<g fill="#fff" stroke="#fff" stroke-width="0.3" text-anchor="middle">
<text transform="scale(0.83,1)" x="1236.1 1243.4" y="660" font-size="12.6">50</text>
</g>
<g fill="#fff" stroke="#fff" stroke-width="0.3" text-anchor="middle">
<text transform="scale(0.83,1)" x="1236.1 1243.4" y="670" font-size="12.6">40</text>
</g>
<g fill="#fff" stroke="#fff" stroke-width="0.3" text-anchor="middle">
<text transform="scale(0.83,1)" x="1236.1 1243.4" y="679" font-size="12.6">30</text>
</g>
<g fill="#fff" stroke="#fff" stroke-width="0.3" text-anchor="middle">
<text transform="scale(0.83,1)" x="1236.1 1243.4" y="688" font-size="12.6">20</text>
</g>
<g fill="#f00" stroke="#f00" stroke-width="0.3" text-anchor="middle">
<text transform="scale(0.9,1)" x="20.6 26.1 31.7 92.8 120.6 126.1 131.7 137.2 142.8 148.3 153.9 159.4 165" y="622.5" font-size="10">014()=53.5541</text>
<text x="36 51 61 71 91 101" y="622.5" font-size="10">日相対力終値</text>
</g>
<rect x="16" y="623" width="135" height="1" fill="#f00"/>
<g fill="#0ff" stroke="#0ff" stroke-width="0.3" text-anchor="middle">
<text transform="scale(0.9,1)" x="176.1 181.7 187.2 248.3 276.1 281.7 287.2 292.8 298.3 303.9 309.4 315 320.6" y="622.5" font-size="10">009()=49.5105</text>
<text x="176 191 201 211 231 241" y="622.5" font-size="10">日相対力終値</text>
</g>
<rect x="156" y="623" width="135" height="1" fill="#0ff"/>
</g>
</svg>
</body></html>
